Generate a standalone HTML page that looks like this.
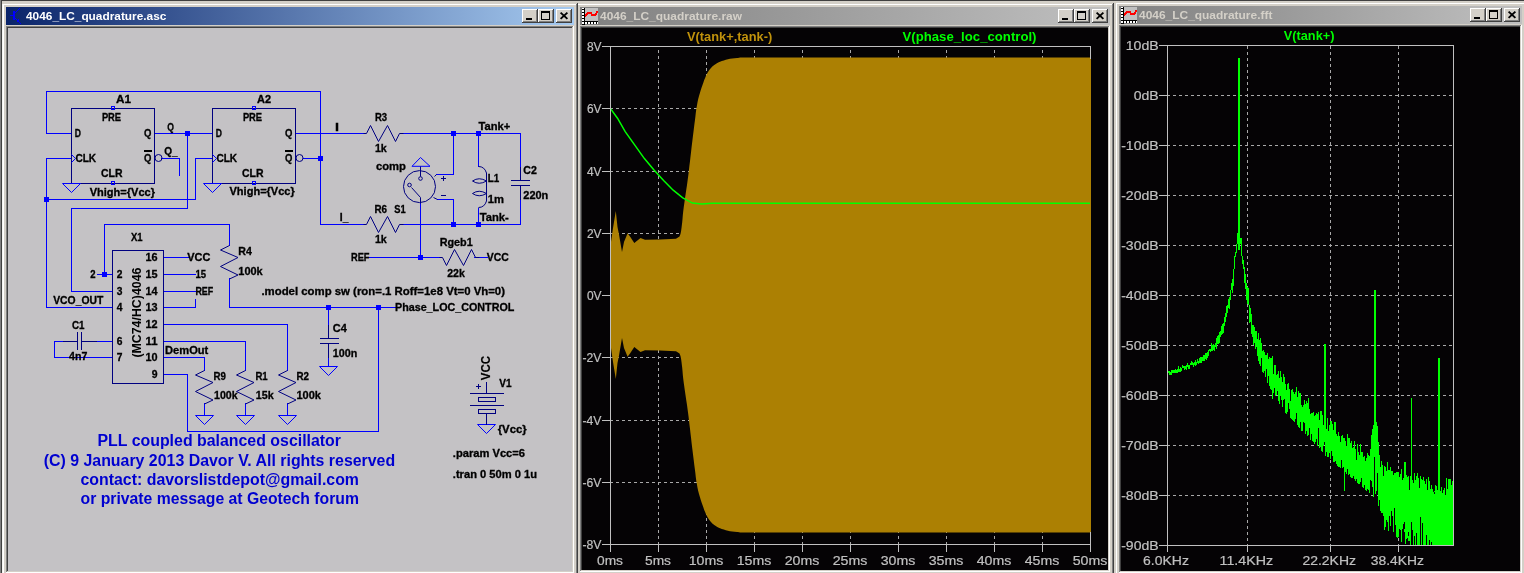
<!DOCTYPE html><html><head><meta charset="utf-8"><style>html,body{margin:0;padding:0;background:#d4d0c8;overflow:hidden}svg{display:block;will-change:transform}</style></head><body><svg width="1524" height="573" viewBox="0 0 1524 573" font-family='"Liberation Sans", sans-serif'>
<defs><linearGradient id="ga" x1="0" x2="1" y1="0" y2="0"><stop offset="0" stop-color="#0a246a"/><stop offset="1" stop-color="#a6caf0"/></linearGradient><linearGradient id="gi" x1="0" x2="1" y1="0" y2="0"><stop offset="0" stop-color="#808080"/><stop offset="1" stop-color="#c0c0c0"/></linearGradient><clipPath id="cb"><rect x="582" y="28" width="526" height="542"/></clipPath><clipPath id="cc"><rect x="1121" y="27" width="399" height="543"/></clipPath><clipPath id="ca"><rect x="8" y="28" width="564" height="543"/></clipPath></defs>
<rect x="0" y="0" width="1524" height="573" fill="#d4d0c8"/>
<g shape-rendering="crispEdges">
<rect x="0" y="0" width="1524" height="1" fill="#404040"/>
<rect x="0" y="0" width="1" height="573" fill="#808080"/>
<rect x="1" y="1" width="1" height="572" fill="#404040"/>
</g>
<g shape-rendering="crispEdges">
<rect x="1115" y="2" width="411" height="575" fill="#d4d0c8"/>
<rect x="1116" y="3" width="409" height="1" fill="#ffffff"/>
<rect x="1116" y="3" width="1" height="573" fill="#ffffff"/>
<rect x="1115" y="576" width="411" height="1" fill="#404040"/>
<rect x="1525" y="2" width="1" height="575" fill="#404040"/>
<rect x="1116" y="575" width="409" height="1" fill="#808080"/>
<rect x="1524" y="3" width="1" height="573" fill="#808080"/>
<rect x="1119" y="6" width="403" height="18" fill="url(#gi)"/>
<rect x="1119" y="25" width="403" height="1" fill="#808080"/>
<rect x="1119" y="25" width="1" height="548" fill="#808080"/>
<rect x="1120" y="26" width="401" height="1" fill="#404040"/>
<rect x="1120" y="26" width="1" height="546" fill="#404040"/>
<rect x="1119" y="572" width="403" height="1" fill="#ffffff"/>
<rect x="1521" y="25" width="1" height="548" fill="#ffffff"/>
<rect x="1120" y="571" width="401" height="1" fill="#d4d0c8"/>
<rect x="1520" y="26" width="1" height="546" fill="#d4d0c8"/>
<rect x="1121" y="27" width="399" height="544" fill="#050305"/>
<text x="1139" y="19" font-size="11" font-weight="bold" fill="#d4d0c8" textLength="133.4" lengthAdjust="spacingAndGlyphs">4046_LC_quadrature.fft</text>
<rect x="1504" y="8" width="16" height="14" fill="#d4d0c8"/>
<rect x="1504" y="8" width="16" height="1" fill="#ffffff"/>
<rect x="1504" y="8" width="1" height="14" fill="#ffffff"/>
<rect x="1504" y="21" width="16" height="1" fill="#404040"/>
<rect x="1519" y="8" width="1" height="14" fill="#404040"/>
<rect x="1505" y="20" width="14" height="1" fill="#808080"/>
<rect x="1518" y="9" width="1" height="12" fill="#808080"/>
<path d="M1508.6 11.6L1515.4 17.9M1515.4 11.6L1508.6 17.9" stroke="#000" stroke-width="1.9" shape-rendering="geometricPrecision"/>
<rect x="1486" y="8" width="16" height="14" fill="#d4d0c8"/>
<rect x="1486" y="8" width="16" height="1" fill="#ffffff"/>
<rect x="1486" y="8" width="1" height="14" fill="#ffffff"/>
<rect x="1486" y="21" width="16" height="1" fill="#404040"/>
<rect x="1501" y="8" width="1" height="14" fill="#404040"/>
<rect x="1487" y="20" width="14" height="1" fill="#808080"/>
<rect x="1500" y="9" width="1" height="12" fill="#808080"/>
<rect x="1489" y="10" width="9" height="9" fill="#000"/>
<rect x="1490" y="12" width="7" height="6" fill="#d4d0c8"/>
<rect x="1470" y="8" width="16" height="14" fill="#d4d0c8"/>
<rect x="1470" y="8" width="16" height="1" fill="#ffffff"/>
<rect x="1470" y="8" width="1" height="14" fill="#ffffff"/>
<rect x="1470" y="21" width="16" height="1" fill="#404040"/>
<rect x="1485" y="8" width="1" height="14" fill="#404040"/>
<rect x="1471" y="20" width="14" height="1" fill="#808080"/>
<rect x="1484" y="9" width="1" height="12" fill="#808080"/>
<rect x="1474" y="17" width="6" height="2" fill="#000"/>
<rect x="1124" y="7" width="13" height="13" fill="#c0c0c0"/>
<rect x="1121" y="7" width="2" height="16" fill="#ffffff"/>
<rect x="1121" y="21" width="16" height="2" fill="#ffffff"/>
<rect x="1121" y="8" width="3" height="1" fill="#000"/>
<rect x="1121" y="11" width="3" height="1" fill="#000"/>
<rect x="1121" y="14" width="3" height="1" fill="#000"/>
<rect x="1121" y="17" width="3" height="1" fill="#000"/>
<rect x="1121" y="20" width="3" height="1" fill="#000"/>
<rect x="1121" y="23" width="3" height="1" fill="#000"/>
<rect x="1123" y="7" width="1" height="16" fill="#000"/>
<rect x="1121" y="20" width="16" height="1" fill="#000"/>
<rect x="1123" y="21" width="1" height="2" fill="#000"/>
<rect x="1126" y="21" width="1" height="2" fill="#000"/>
<rect x="1129" y="21" width="1" height="2" fill="#000"/>
<rect x="1132" y="21" width="1" height="2" fill="#000"/>
<rect x="1135" y="21" width="1" height="2" fill="#000"/>
<path d="M1124 15.5L1127.5 11.5L1129.5 11.5L1131.5 14.3L1133.5 14.3L1136.8 10.5" stroke="#ff0000" stroke-width="2" fill="none"/>
</g>
<g clip-path="url(#cc)">
<path d="M1167 95.5H1453" stroke="#a8a8a8" stroke-width="1" stroke-dasharray="3 3" shape-rendering="crispEdges"/>
<path d="M1167 145.5H1453" stroke="#a8a8a8" stroke-width="1" stroke-dasharray="3 3" shape-rendering="crispEdges"/>
<path d="M1167 195.5H1453" stroke="#a8a8a8" stroke-width="1" stroke-dasharray="3 3" shape-rendering="crispEdges"/>
<path d="M1167 245.5H1453" stroke="#a8a8a8" stroke-width="1" stroke-dasharray="3 3" shape-rendering="crispEdges"/>
<path d="M1167 295.5H1453" stroke="#a8a8a8" stroke-width="1" stroke-dasharray="3 3" shape-rendering="crispEdges"/>
<path d="M1167 345.5H1453" stroke="#a8a8a8" stroke-width="1" stroke-dasharray="3 3" shape-rendering="crispEdges"/>
<path d="M1167 395.5H1453" stroke="#a8a8a8" stroke-width="1" stroke-dasharray="3 3" shape-rendering="crispEdges"/>
<path d="M1167 445.5H1453" stroke="#a8a8a8" stroke-width="1" stroke-dasharray="3 3" shape-rendering="crispEdges"/>
<path d="M1167 495.5H1453" stroke="#a8a8a8" stroke-width="1" stroke-dasharray="3 3" shape-rendering="crispEdges"/>
<path d="M1247.5 46V545" stroke="#a8a8a8" stroke-width="1" stroke-dasharray="3 3" shape-rendering="crispEdges"/>
<path d="M1330.5 46V545" stroke="#a8a8a8" stroke-width="1" stroke-dasharray="3 3" shape-rendering="crispEdges"/>
<path d="M1398.5 46V545" stroke="#a8a8a8" stroke-width="1" stroke-dasharray="3 3" shape-rendering="crispEdges"/>
<path d="M1167.0 373.8 L1167.4 374.9 L1167.8 374.3 L1168.3 372.1 L1168.7 371.8 L1169.1 371.9 L1169.5 373.2 L1169.9 371.9 L1170.3 373.8 L1170.7 373.4 L1171.1 375.2 L1171.5 374.8 L1171.9 371.2 L1172.4 371.7 L1172.8 371.0 L1173.2 372.7 L1173.6 372.2 L1174.0 369.9 L1174.4 372.5 L1174.7 370.8 L1175.1 371.2 L1175.5 372.8 L1175.9 370.1 L1176.3 371.0 L1176.7 371.9 L1177.1 373.1 L1177.5 370.2 L1177.9 368.9 L1178.3 368.0 L1178.6 371.4 L1179.0 372.3 L1179.4 370.7 L1179.8 370.0 L1180.2 371.5 L1180.5 369.2 L1180.9 367.1 L1181.3 369.7 L1181.7 370.8 L1182.0 368.3 L1182.4 366.0 L1182.8 367.0 L1183.2 366.2 L1183.5 366.5 L1183.9 367.5 L1184.3 365.9 L1184.6 367.9 L1185.0 369.5 L1185.4 366.5 L1185.7 366.7 L1186.1 369.8 L1186.4 365.6 L1186.8 365.7 L1187.2 367.1 L1187.5 363.3 L1187.9 365.9 L1188.2 369.0 L1188.6 366.2 L1188.9 366.9 L1189.3 368.6 L1189.7 368.4 L1190.0 365.1 L1190.4 363.5 L1190.7 363.1 L1191.0 363.9 L1191.4 364.3 L1191.7 360.8 L1192.1 362.8 L1192.4 361.9 L1192.8 365.1 L1193.1 363.2 L1193.5 363.6 L1193.8 366.5 L1194.1 363.8 L1194.5 361.7 L1194.8 363.0 L1195.2 365.7 L1195.5 360.4 L1195.8 363.2 L1196.2 363.0 L1196.5 362.7 L1196.8 365.0 L1197.2 361.0 L1197.5 360.3 L1197.8 361.8 L1198.1 360.6 L1198.5 363.3 L1198.8 363.5 L1199.1 362.9 L1199.5 359.2 L1199.8 359.6 L1200.1 357.2 L1200.4 358.7 L1200.7 362.7 L1201.1 362.6 L1201.4 362.4 L1201.7 357.5 L1202.0 357.1 L1202.3 359.3 L1202.7 361.1 L1203.0 359.2 L1203.3 355.3 L1203.6 361.3 L1203.9 359.4 L1204.2 355.4 L1204.6 356.1 L1204.9 360.7 L1205.2 356.0 L1205.5 358.1 L1205.8 353.4 L1206.1 359.6 L1206.4 352.9 L1206.7 359.1 L1207.0 353.6 L1207.3 351.6 L1207.6 358.2 L1207.9 353.8 L1208.2 352.8 L1208.5 356.3 L1208.8 350.8 L1209.1 350.4 L1209.5 350.2 L1209.8 348.7 L1210.0 350.2 L1210.3 351.7 L1210.6 350.1 L1210.9 350.4 L1211.2 350.2 L1211.5 349.2 L1211.8 343.3 L1212.1 346.3 L1212.4 351.1 L1212.7 347.0 L1213.0 348.6 L1213.3 344.0 L1213.6 345.0 L1213.9 349.9 L1214.2 346.9 L1214.5 351.3 L1214.7 346.5 L1215.0 345.1 L1215.3 344.1 L1215.6 343.9 L1215.9 345.8 L1216.2 348.9 L1216.5 343.3 L1216.7 347.0 L1217.0 338.1 L1217.3 336.8 L1217.6 336.2 L1217.9 343.8 L1218.2 336.1 L1218.4 340.7 L1218.7 344.3 L1219.0 334.9 L1219.3 336.0 L1219.5 342.5 L1219.8 332.3 L1220.1 335.3 L1220.4 331.4 L1220.7 336.6 L1220.9 333.8 L1221.2 326.1 L1221.5 333.4 L1221.7 326.2 L1222.0 334.8 L1222.3 325.7 L1222.6 323.7 L1222.8 326.5 L1223.1 327.5 L1223.4 332.5 L1223.6 322.9 L1223.9 326.4 L1224.2 319.5 L1224.4 325.6 L1224.7 316.7 L1225.0 322.5 L1225.2 314.6 L1225.5 313.0 L1225.8 316.8 L1226.0 316.7 L1226.3 312.3 L1226.6 314.1 L1226.8 307.8 L1227.1 305.4 L1227.3 308.1 L1227.6 313.0 L1227.9 307.9 L1228.1 305.0 L1228.4 302.7 L1228.6 307.8 L1228.9 299.4 L1229.2 309.2 L1229.4 306.0 L1229.7 299.3 L1229.9 296.8 L1230.2 299.5 L1230.4 293.7 L1230.7 297.2 L1230.9 292.0 L1231.2 285.9 L1231.4 285.2 L1231.7 286.6 L1232.0 283.1 L1232.2 293.0 L1232.5 283.3 L1232.7 282.2 L1233.0 279.4 L1233.2 279.4 L1233.4 285.8 L1233.7 274.3 L1233.9 272.2 L1234.2 263.4 L1234.4 268.2 L1234.7 262.8 L1234.9 256.2 L1235.2 256.1 L1235.4 252.5 L1235.7 252.8 L1235.9 252.8 L1236.2 252.2 L1236.4 249.3 L1236.6 243.8 L1236.9 247.1 L1237.1 242.0 L1237.4 233.2 L1237.6 241.4 L1237.8 241.0 L1238.1 238.1 L1238.3 241.0 L1238.6 244.0 L1238.8 241.6 L1239.0 242.5 L1239.3 239.0 L1239.5 238.2 L1239.7 237.9 L1240.0 241.4 L1240.2 242.0 L1240.5 240.9 L1240.7 243.9 L1240.9 238.7 L1241.2 237.8 L1241.4 243.4 L1241.6 243.5 L1241.9 254.9 L1242.1 256.9 L1242.3 256.2 L1242.6 257.9 L1242.8 263.2 L1243.0 263.3 L1243.2 260.0 L1243.5 268.6 L1243.7 268.0 L1243.9 263.7 L1244.2 273.2 L1244.4 275.1 L1244.6 274.8 L1244.8 276.0 L1245.1 285.7 L1245.3 287.6 L1245.5 273.7 L1245.7 289.2 L1246.0 284.3 L1246.2 282.6 L1246.4 284.1 L1246.6 284.5 L1246.9 300.0 L1247.1 299.4 L1247.3 303.5 L1247.5 291.9 L1247.8 297.3 L1248.0 287.3 L1248.2 299.8 L1248.4 296.1 L1248.6 300.7 L1248.9 291.9 L1249.1 315.1 L1249.3 318.6 L1249.5 320.1 L1249.7 308.3 L1250.0 323.0 L1250.2 310.7 L1250.4 310.4 L1250.6 307.8 L1250.8 313.0 L1251.0 313.6 L1251.3 319.8 L1251.5 318.4 L1251.7 333.8 L1251.9 326.2 L1252.1 336.5 L1252.3 331.1 L1252.5 332.8 L1252.8 334.7 L1253.0 324.9 L1253.2 342.2 L1253.4 330.0 L1253.6 327.2 L1253.8 344.5 L1254.0 336.4 L1254.2 334.7 L1254.4 327.0 L1254.7 328.6 L1254.9 335.4 L1255.1 349.2 L1255.3 335.8 L1255.5 330.9 L1255.7 334.9 L1255.9 333.3 L1256.1 341.3 L1256.3 347.3 L1256.5 339.1 L1256.7 338.8 L1256.9 330.9 L1257.2 356.4 L1257.4 343.3 L1257.6 356.3 L1257.8 339.1 L1258.0 342.5 L1258.2 359.5 L1258.4 359.5 L1258.6 333.0 L1258.8 361.3 L1259.0 349.7 L1259.2 345.5 L1259.4 359.6 L1259.6 363.8 L1259.8 339.6 L1260.0 350.8 L1260.2 365.5 L1260.4 355.2 L1260.6 350.4 L1260.8 338.3 L1261.0 345.7 L1261.2 356.9 L1261.4 343.5 L1261.6 357.5 L1261.8 343.7 L1262.0 355.2 L1262.2 352.1 L1262.4 358.2 L1262.6 350.8 L1262.8 371.8 L1263.0 372.2 L1263.2 350.3 L1263.4 373.0 L1263.6 353.0 L1263.8 358.2 L1264.0 356.6 L1264.2 364.0 L1264.4 352.5 L1264.5 355.8 L1264.7 365.8 L1264.9 371.0 L1265.1 361.3 L1265.3 377.2 L1265.5 373.4 L1265.7 355.2 L1265.9 357.6 L1266.1 363.0 L1266.3 356.5 L1266.5 368.9 L1266.7 355.0 L1266.9 357.4 L1267.0 355.6 L1267.2 352.7 L1267.4 381.7 L1267.6 373.8 L1267.8 382.5 L1268.0 359.0 L1268.2 375.5 L1268.4 372.8 L1268.6 365.1 L1268.7 360.1 L1268.9 363.5 L1269.1 385.3 L1269.3 385.7 L1269.5 366.7 L1269.7 382.4 L1269.9 357.5 L1270.1 368.2 L1270.2 363.8 L1270.4 389.2 L1270.6 370.1 L1270.8 381.6 L1271.0 358.3 L1271.2 389.1 L1271.3 381.6 L1271.5 369.7 L1271.7 390.0 L1271.9 368.3 L1272.1 370.0 L1272.3 355.6 L1272.4 391.2 L1272.6 398.6 L1272.8 369.0 L1273.0 392.1 L1273.2 373.6 L1273.4 374.9 L1273.5 393.0 L1273.7 388.1 L1273.9 389.5 L1274.1 381.0 L1274.3 373.6 L1274.4 388.2 L1274.6 370.9 L1274.8 372.5 L1275.0 364.6 L1275.2 375.2 L1275.3 395.9 L1275.5 374.2 L1275.7 369.1 L1275.9 387.4 L1276.0 374.2 L1276.2 384.9 L1276.4 389.8 L1276.6 386.9 L1276.7 395.2 L1276.9 384.4 L1277.1 390.5 L1277.3 376.5 L1277.5 374.0 L1277.6 385.9 L1277.8 381.2 L1278.0 384.4 L1278.2 395.6 L1278.3 400.8 L1278.5 384.4 L1278.7 398.3 L1278.8 371.2 L1279.0 375.3 L1279.2 402.2 L1279.4 402.5 L1279.5 401.5 L1279.7 380.7 L1279.9 403.3 L1280.1 390.3 L1280.2 380.4 L1280.4 378.3 L1280.6 382.0 L1280.7 393.2 L1280.9 371.3 L1281.1 394.7 L1281.2 384.6 L1281.4 400.2 L1281.6 376.9 L1281.8 387.5 L1281.9 394.7 L1282.1 381.7 L1282.3 388.7 L1282.4 386.3 L1282.6 386.7 L1282.8 388.2 L1282.9 406.9 L1283.1 388.9 L1283.3 400.1 L1283.4 374.0 L1283.6 391.2 L1283.8 391.0 L1283.9 392.7 L1284.1 376.9 L1284.3 398.5 L1284.4 382.7 L1284.6 391.4 L1284.8 385.4 L1284.9 396.0 L1285.1 384.5 L1285.3 406.8 L1285.4 387.8 L1285.6 412.4 L1285.8 395.8 L1285.9 412.7 L1286.1 412.9 L1286.2 409.0 L1286.4 407.1 L1286.6 394.6 L1286.7 409.8 L1286.9 390.0 L1287.1 398.2 L1287.2 387.3 L1287.4 405.4 L1287.5 383.6 L1287.7 407.1 L1287.9 411.7 L1288.0 401.6 L1288.2 402.7 L1288.4 396.9 L1288.5 397.3 L1288.7 398.0 L1288.8 383.4 L1289.0 399.5 L1289.2 409.0 L1289.3 399.0 L1289.5 399.6 L1289.6 390.0 L1289.8 388.8 L1290.0 401.1 L1290.1 405.1 L1290.3 408.9 L1290.4 401.6 L1290.6 401.6 L1290.7 418.0 L1290.9 416.3 L1291.1 409.7 L1291.2 393.9 L1291.4 402.1 L1291.5 418.9 L1291.7 413.0 L1291.8 389.6 L1292.0 411.7 L1292.2 419.6 L1292.3 415.1 L1292.5 403.6 L1292.6 395.8 L1292.8 404.0 L1292.9 388.9 L1293.1 394.8 L1293.2 410.0 L1293.4 395.4 L1293.6 393.7 L1293.7 409.0 L1293.9 420.7 L1294.0 407.5 L1294.2 393.9 L1294.3 409.4 L1294.5 416.5 L1294.6 422.3 L1294.8 402.2 L1294.9 404.6 L1295.1 414.5 L1295.2 418.6 L1295.4 410.9 L1295.5 409.3 L1295.7 401.9 L1295.8 391.7 L1296.0 410.8 L1296.1 407.8 L1296.3 397.2 L1296.4 412.5 L1296.6 387.1 L1296.7 396.7 L1296.9 400.8 L1297.0 411.0 L1297.2 412.3 L1297.3 398.4 L1297.5 402.0 L1297.6 397.2 L1297.8 424.9 L1297.9 406.7 L1298.1 391.4 L1298.2 411.5 L1298.4 414.3 L1298.5 426.6 L1298.7 403.4 L1298.8 395.7 L1299.0 407.9 L1299.1 396.9 L1299.3 392.8 L1299.4 427.6 L1299.6 402.9 L1299.7 411.5 L1299.9 423.3 L1300.0 406.5 L1300.2 397.3 L1300.3 422.1 L1300.5 392.6 L1300.6 420.6 L1300.7 420.6 L1300.9 405.0 L1301.0 405.3 L1301.2 408.3 L1301.3 419.2 L1301.5 420.0 L1301.6 414.8 L1301.8 423.8 L1301.9 407.1 L1302.0 430.4 L1302.2 430.4 L1302.3 407.4 L1302.5 422.4 L1302.6 422.7 L1302.8 431.0 L1302.9 407.4 L1303.1 418.7 L1303.2 420.0 L1303.3 414.1 L1303.5 421.5 L1303.6 413.5 L1303.8 417.4 L1303.9 407.6 L1304.1 402.8 L1304.2 405.7 L1304.3 404.4 L1304.5 411.9 L1304.6 400.1 L1304.8 422.6 L1304.9 422.9 L1305.0 403.2 L1305.2 413.1 L1305.3 429.3 L1305.5 403.6 L1305.6 434.1 L1305.7 405.8 L1305.9 406.1 L1306.0 431.8 L1306.2 421.9 L1306.3 422.0 L1306.4 406.2 L1306.6 427.2 L1306.7 413.4 L1306.9 401.5 L1307.0 412.7 L1307.1 415.1 L1307.3 435.8 L1307.4 433.5 L1307.6 403.2 L1307.7 417.5 L1307.8 415.3 L1308.0 420.7 L1308.1 435.0 L1308.2 432.3 L1308.4 397.6 L1308.5 429.5 L1308.7 399.8 L1308.8 420.2 L1308.9 411.7 L1309.1 416.5 L1309.2 414.3 L1309.3 415.0 L1309.5 427.7 L1309.6 409.7 L1309.7 408.6 L1309.9 428.0 L1310.0 425.6 L1310.1 419.1 L1310.3 438.9 L1310.4 439.7 L1310.6 414.0 L1310.7 439.3 L1310.8 419.1 L1311.0 415.2 L1311.1 423.7 L1311.2 431.8 L1311.4 418.8 L1311.5 413.3 L1311.6 428.5 L1311.8 414.0 L1311.9 433.5 L1312.0 412.8 L1312.2 440.9 L1312.3 415.3 L1312.4 430.9 L1312.6 414.3 L1312.7 417.4 L1312.8 425.1 L1313.0 419.9 L1313.1 441.8 L1313.2 412.9 L1313.4 413.1 L1313.5 442.2 L1313.6 433.3 L1313.7 416.9 L1313.9 413.8 L1314.0 422.6 L1314.1 423.0 L1314.3 432.3 L1314.4 430.2 L1314.5 415.8 L1314.7 423.7 L1314.8 443.6 L1314.9 428.8 L1315.1 424.5 L1315.2 434.5 L1315.3 437.0 L1315.4 441.9 L1315.6 431.7 L1315.7 422.2 L1315.8 415.3 L1316.0 438.1 L1316.1 431.8 L1316.2 425.7 L1316.3 431.8 L1316.5 433.9 L1316.6 419.3 L1316.7 438.7 L1316.9 428.3 L1317.0 413.1 L1317.1 419.0 L1317.2 446.1 L1317.4 417.0 L1317.5 430.4 L1317.6 429.7 L1317.8 442.6 L1317.9 427.1 L1318.0 421.5 L1318.1 426.8 L1318.3 418.8 L1318.4 426.0 L1318.5 423.9 L1318.6 411.9 L1318.8 428.2 L1318.9 426.5 L1319.0 423.0 L1319.1 448.1 L1319.3 423.0 L1319.4 428.1 L1319.5 420.3 L1319.7 443.4 L1319.8 430.6 L1319.9 423.9 L1320.0 427.6 L1320.2 444.5 L1320.3 431.0 L1320.4 433.5 L1320.5 445.8 L1320.7 447.1 L1320.8 428.9 L1320.9 430.4 L1321.0 410.9 L1321.1 426.6 L1321.3 427.3 L1321.4 430.9 L1321.5 438.3 L1321.6 450.5 L1321.8 418.9 L1321.9 450.8 L1322.0 422.9 L1322.1 437.9 L1322.3 414.8 L1322.4 438.9 L1322.5 421.8 L1322.6 426.6 L1322.7 429.9 L1322.9 451.7 L1323.0 424.8 L1323.1 437.9 L1323.2 440.2 L1323.4 445.6 L1323.5 426.2 L1323.6 435.9 L1323.7 433.3 L1323.8 436.9 L1324.0 427.8 L1324.1 435.2 L1324.2 434.6 L1324.3 435.4 L1324.4 436.9 L1324.6 415.6 L1324.7 435.0 L1324.8 441.5 L1324.9 344.0 L1325.1 344.0 L1325.2 344.0 L1325.3 344.0 L1325.4 344.0 L1325.5 431.9 L1325.7 437.2 L1325.8 456.0 L1325.9 444.6 L1326.0 432.6 L1326.1 433.5 L1326.2 438.1 L1326.4 429.2 L1326.5 435.4 L1326.6 451.0 L1326.7 451.1 L1326.8 438.0 L1327.0 438.2 L1327.1 443.2 L1327.2 433.4 L1327.3 432.7 L1327.4 442.8 L1327.6 422.8 L1327.7 456.2 L1327.8 423.7 L1327.9 418.4 L1328.0 456.5 L1328.1 444.3 L1328.3 456.7 L1328.4 443.0 L1328.5 446.1 L1328.6 445.6 L1328.7 445.2 L1328.8 449.4 L1329.0 430.6 L1329.1 450.2 L1329.2 445.2 L1329.3 453.2 L1329.4 442.2 L1329.5 434.7 L1329.7 435.3 L1329.8 445.2 L1329.9 425.9 L1330.0 424.9 L1330.1 453.2 L1330.2 458.6 L1330.3 422.4 L1330.5 444.1 L1330.6 458.9 L1330.7 438.9 L1330.8 446.2 L1330.9 431.3 L1331.0 420.6 L1331.2 430.3 L1331.3 429.0 L1331.4 430.8 L1331.5 449.8 L1331.6 450.6 L1331.7 427.2 L1331.8 449.9 L1331.9 450.7 L1332.1 446.8 L1332.2 441.6 L1332.3 435.8 L1332.4 450.6 L1332.5 424.4 L1332.6 456.0 L1332.7 437.9 L1332.9 433.5 L1333.0 443.1 L1333.1 439.8 L1333.2 441.9 L1333.3 433.1 L1333.4 439.9 L1333.5 448.2 L1333.6 440.8 L1333.8 461.9 L1333.9 446.4 L1334.0 429.9 L1334.1 451.5 L1334.2 439.8 L1334.3 462.4 L1334.4 448.0 L1334.5 442.8 L1334.7 441.4 L1334.8 448.3 L1334.9 457.4 L1335.0 422.2 L1335.1 443.1 L1335.2 458.3 L1335.3 429.8 L1335.4 458.2 L1335.5 448.0 L1335.6 461.1 L1335.8 452.3 L1335.9 441.7 L1336.0 447.9 L1336.1 437.5 L1336.2 464.2 L1336.3 449.9 L1336.4 445.6 L1336.5 439.6 L1336.6 458.1 L1336.7 433.8 L1336.9 457.3 L1337.0 449.6 L1337.1 465.0 L1337.2 446.6 L1337.3 438.2 L1337.4 438.1 L1337.5 443.6 L1337.6 444.8 L1337.7 437.2 L1337.8 465.7 L1337.9 435.7 L1338.1 459.2 L1338.2 451.3 L1338.3 448.9 L1338.4 431.8 L1338.5 464.9 L1338.6 450.7 L1338.7 459.4 L1338.8 466.6 L1338.9 461.9 L1339.0 441.8 L1339.1 440.3 L1339.2 435.8 L1339.3 451.0 L1339.5 448.1 L1339.6 467.3 L1339.7 452.7 L1339.8 437.9 L1339.9 442.7 L1340.0 454.5 L1340.1 455.7 L1340.2 448.5 L1340.3 468.0 L1340.4 442.0 L1340.5 443.2 L1340.6 468.3 L1340.7 464.7 L1340.8 461.7 L1340.9 455.5 L1341.1 435.7 L1341.2 460.3 L1341.3 456.9 L1341.4 453.9 L1341.5 438.6 L1341.6 444.0 L1341.7 450.6 L1341.8 443.6 L1341.9 457.5 L1342.0 459.2 L1342.1 435.0 L1342.2 443.4 L1342.3 468.3 L1342.4 440.8 L1342.5 439.1 L1342.6 466.7 L1342.7 450.6 L1342.8 465.5 L1342.9 456.4 L1343.0 444.1 L1343.2 460.0 L1343.3 441.7 L1343.4 445.7 L1343.5 442.2 L1343.6 467.3 L1343.7 442.8 L1343.8 447.6 L1343.9 440.9 L1344.0 438.1 L1344.1 458.9 L1344.2 452.5 L1344.3 446.2 L1344.4 449.4 L1344.5 471.5 L1344.6 440.7 L1344.7 471.7 L1344.8 461.9 L1344.9 490.5 L1345.0 466.3 L1345.1 442.9 L1345.2 468.1 L1345.3 444.7 L1345.4 472.3 L1345.5 456.6 L1345.6 444.8 L1345.7 462.0 L1345.8 440.8 L1345.9 458.2 L1346.0 448.1 L1346.1 458.5 L1346.2 467.6 L1346.3 446.1 L1346.4 463.5 L1346.5 463.1 L1346.6 467.9 L1346.7 470.1 L1346.8 455.2 L1346.9 473.6 L1347.0 472.8 L1347.1 446.2 L1347.3 451.8 L1347.4 452.0 L1347.5 434.1 L1347.6 454.3 L1347.7 444.2 L1347.8 469.2 L1347.9 450.9 L1348.0 452.8 L1348.1 441.5 L1348.2 474.6 L1348.3 456.9 L1348.4 457.8 L1348.5 474.8 L1348.6 447.2 L1348.7 449.5 L1348.8 439.6 L1348.9 464.0 L1349.0 438.3 L1349.1 459.6 L1349.2 464.4 L1349.2 474.4 L1349.3 441.4 L1349.4 457.3 L1349.5 451.1 L1349.6 454.8 L1349.7 460.7 L1349.8 446.9 L1349.9 467.1 L1350.0 471.7 L1350.1 454.7 L1350.2 472.8 L1350.3 455.1 L1350.4 469.1 L1350.5 450.6 L1350.6 456.5 L1350.7 470.9 L1350.8 471.6 L1350.9 443.3 L1351.0 477.0 L1351.1 451.4 L1351.2 463.3 L1351.3 459.9 L1351.4 457.0 L1351.5 440.7 L1351.6 477.5 L1351.7 477.6 L1351.8 472.1 L1351.9 478.0 L1352.0 464.3 L1352.1 465.8 L1352.2 461.0 L1352.3 463.8 L1352.4 460.5 L1352.5 478.2 L1352.6 454.2 L1352.7 448.1 L1352.8 478.4 L1352.9 453.4 L1353.0 461.4 L1353.1 448.5 L1353.2 454.3 L1353.3 454.3 L1353.3 447.1 L1353.4 475.5 L1353.5 463.0 L1353.6 451.8 L1353.7 459.7 L1353.8 464.7 L1353.9 455.5 L1354.0 452.8 L1354.1 457.7 L1354.2 441.4 L1354.3 477.9 L1354.4 463.3 L1354.5 455.1 L1354.6 455.5 L1354.7 451.2 L1354.8 479.2 L1354.9 446.9 L1355.0 460.1 L1355.1 449.5 L1355.2 480.4 L1355.3 451.5 L1355.3 457.8 L1355.4 466.2 L1355.5 475.9 L1355.6 471.4 L1355.7 472.5 L1355.8 473.9 L1355.9 481.1 L1356.0 480.1 L1356.1 473.1 L1356.2 462.8 L1356.3 465.3 L1356.4 474.3 L1356.5 466.7 L1356.6 461.8 L1356.7 471.5 L1356.8 460.1 L1356.9 460.0 L1356.9 475.0 L1357.0 463.6 L1357.1 454.0 L1357.2 452.7 L1357.3 466.5 L1357.4 482.3 L1357.5 479.1 L1357.6 482.5 L1357.7 461.9 L1357.8 443.9 L1357.9 466.4 L1358.0 482.8 L1358.1 465.6 L1358.2 465.0 L1358.2 471.1 L1358.3 460.4 L1358.4 460.2 L1358.5 471.0 L1358.6 451.8 L1358.7 461.9 L1358.8 467.4 L1358.9 483.6 L1359.0 463.3 L1359.1 483.7 L1359.2 466.3 L1359.3 455.2 L1359.3 484.0 L1359.4 465.9 L1359.5 484.1 L1359.6 479.3 L1359.7 484.3 L1359.8 455.1 L1359.9 466.3 L1360.0 456.4 L1360.1 470.5 L1360.2 461.7 L1360.3 470.9 L1360.4 463.6 L1360.4 460.5 L1360.5 443.8 L1360.6 481.7 L1360.7 472.5 L1360.8 466.6 L1360.9 459.6 L1361.0 467.8 L1361.1 469.3 L1361.2 454.8 L1361.3 477.1 L1361.3 453.9 L1361.4 467.9 L1361.5 471.1 L1361.6 452.1 L1361.7 478.2 L1361.8 475.5 L1361.9 457.2 L1362.0 454.4 L1362.1 470.4 L1362.2 466.2 L1362.2 452.0 L1362.3 470.7 L1362.4 466.1 L1362.5 460.4 L1362.6 487.0 L1362.7 462.5 L1362.8 481.9 L1362.9 471.8 L1363.0 468.3 L1363.0 460.6 L1363.1 476.8 L1363.2 462.8 L1363.3 468.2 L1363.4 460.9 L1363.5 464.5 L1363.6 488.0 L1363.7 471.1 L1363.8 470.2 L1363.8 466.1 L1363.9 456.9 L1364.0 464.7 L1364.1 459.7 L1364.2 461.3 L1364.3 475.4 L1364.4 458.5 L1364.5 455.8 L1364.5 484.9 L1364.6 468.0 L1364.7 483.0 L1364.8 465.4 L1364.9 466.2 L1365.0 460.9 L1365.1 470.3 L1365.2 468.8 L1365.3 478.1 L1365.3 489.7 L1365.4 466.3 L1365.5 474.3 L1365.6 489.0 L1365.7 471.1 L1365.8 463.6 L1365.9 467.2 L1365.9 473.2 L1366.0 467.5 L1366.1 460.7 L1366.2 465.5 L1366.3 458.0 L1366.4 466.9 L1366.5 465.0 L1366.6 465.5 L1366.6 459.0 L1366.7 464.7 L1366.8 491.1 L1366.9 491.2 L1367.0 459.5 L1367.1 453.3 L1367.2 477.9 L1367.2 469.2 L1367.3 479.6 L1367.4 488.5 L1367.5 476.8 L1367.6 459.2 L1367.7 481.6 L1367.8 454.8 L1367.8 461.4 L1367.9 466.3 L1368.0 454.9 L1368.1 477.7 L1368.2 488.6 L1368.3 481.3 L1368.4 470.8 L1368.4 468.2 L1368.5 488.6 L1368.6 466.3 L1368.7 490.3 L1368.8 456.1 L1368.9 460.0 L1369.0 464.0 L1369.0 483.6 L1369.1 481.0 L1369.2 483.7 L1369.3 466.7 L1369.4 492.5 L1369.5 479.7 L1369.5 467.9 L1369.6 475.9 L1369.7 489.2 L1369.8 456.5 L1369.9 479.3 L1370.0 483.2 L1370.1 462.0 L1370.1 463.5 L1370.2 460.5 L1370.3 461.7 L1370.4 462.9 L1370.5 455.8 L1370.6 473.8 L1370.6 457.6 L1370.7 468.3 L1370.8 456.2 L1370.9 453.3 L1371.0 448.6 L1371.1 452.5 L1371.1 456.2 L1371.2 440.4 L1371.3 450.7 L1371.4 470.4 L1371.5 451.5 L1371.6 435.7 L1371.6 480.7 L1371.7 459.9 L1371.8 434.9 L1371.9 457.7 L1372.0 462.2 L1372.1 487.2 L1372.1 459.9 L1372.2 445.8 L1372.3 450.7 L1372.4 433.4 L1372.5 472.8 L1372.5 482.9 L1372.6 438.9 L1372.7 430.6 L1372.8 458.9 L1372.9 429.1 L1373.0 464.9 L1373.0 448.7 L1373.1 450.2 L1373.2 455.5 L1373.3 459.5 L1373.4 439.7 L1373.5 453.8 L1373.5 425.0 L1373.6 471.1 L1373.7 497.1 L1373.8 488.0 L1373.9 447.7 L1373.9 469.8 L1374.0 441.2 L1374.1 414.0 L1374.2 444.2 L1374.3 437.3 L1374.4 457.3 L1374.4 425.1 L1374.5 448.6 L1374.6 430.5 L1374.7 429.8 L1374.8 290.0 L1374.8 290.0 L1374.9 290.0 L1375.0 290.0 L1375.1 290.0 L1375.2 290.0 L1375.2 290.0 L1375.3 449.3 L1375.4 479.4 L1375.5 436.3 L1375.6 425.5 L1375.6 445.8 L1375.7 493.9 L1375.8 476.4 L1375.9 439.1 L1376.0 482.7 L1376.0 457.1 L1376.1 422.3 L1376.2 461.6 L1376.3 490.9 L1376.4 439.0 L1376.4 460.1 L1376.5 426.3 L1376.6 470.3 L1376.7 447.2 L1376.8 451.6 L1376.8 486.6 L1376.9 429.4 L1377.0 473.4 L1377.1 457.2 L1377.2 463.3 L1377.2 447.9 L1377.3 437.2 L1377.4 472.5 L1377.5 443.5 L1377.6 461.9 L1377.6 426.0 L1377.7 430.3 L1377.8 434.1 L1377.9 446.3 L1378.0 448.6 L1378.0 483.6 L1378.1 506.1 L1378.2 485.7 L1378.3 462.3 L1378.4 472.1 L1378.4 469.5 L1378.5 474.8 L1378.6 472.6 L1378.7 459.4 L1378.7 463.4 L1378.8 455.9 L1378.9 442.5 L1379.0 479.8 L1379.1 457.8 L1379.1 455.3 L1379.2 491.6 L1379.3 469.6 L1379.4 462.2 L1379.4 500.3 L1379.5 456.4 L1379.6 466.3 L1379.7 460.5 L1379.8 462.9 L1379.8 474.2 L1379.9 474.4 L1380.0 484.9 L1380.1 467.7 L1380.1 467.3 L1380.2 480.3 L1380.3 487.3 L1380.4 482.7 L1380.5 470.5 L1380.5 478.3 L1380.6 476.4 L1380.7 470.4 L1380.8 510.8 L1380.8 467.2 L1380.9 479.1 L1381.0 472.8 L1381.1 494.9 L1381.2 481.4 L1381.2 485.3 L1381.3 479.4 L1381.4 476.9 L1381.5 497.3 L1381.5 478.8 L1381.6 512.4 L1381.7 477.8 L1381.8 512.6 L1381.8 461.4 L1381.9 491.9 L1382.0 480.9 L1382.1 476.2 L1382.2 470.0 L1382.2 472.4 L1382.3 485.9 L1382.4 474.5 L1382.5 481.2 L1382.5 474.4 L1382.6 513.2 L1382.7 465.4 L1382.8 477.0 L1382.8 486.1 L1382.9 480.7 L1383.0 484.8 L1383.1 510.8 L1383.1 496.6 L1383.2 492.2 L1383.3 506.3 L1383.4 488.9 L1383.4 513.4 L1383.5 491.6 L1383.6 477.8 L1383.7 484.3 L1383.7 476.0 L1383.8 492.5 L1383.9 516.0 L1384.0 489.5 L1384.0 506.7 L1384.1 478.6 L1384.2 503.2 L1384.3 481.0 L1384.3 510.0 L1384.4 494.7 L1384.5 485.4 L1384.6 509.2 L1384.6 509.4 L1384.7 500.4 L1384.8 475.7 L1384.9 517.5 L1384.9 465.7 L1385.0 529.7 L1385.1 513.4 L1385.2 498.0 L1385.2 475.4 L1385.3 471.5 L1385.4 514.7 L1385.5 509.7 L1385.5 467.1 L1385.6 501.8 L1385.7 467.7 L1385.8 478.1 L1385.8 472.6 L1385.9 519.2 L1386.0 509.7 L1386.1 487.5 L1386.1 485.4 L1386.2 496.0 L1386.3 498.8 L1386.4 473.2 L1386.4 488.1 L1386.5 482.8 L1386.6 520.2 L1386.7 498.7 L1386.7 476.4 L1386.8 470.8 L1386.9 488.8 L1387.0 490.7 L1387.0 464.0 L1387.1 494.9 L1387.2 490.5 L1387.2 521.3 L1387.3 498.3 L1387.4 482.2 L1387.5 521.6 L1387.5 484.6 L1387.6 475.3 L1387.7 462.4 L1387.8 517.8 L1387.8 493.5 L1387.9 479.6 L1388.0 474.2 L1388.0 502.9 L1388.1 469.9 L1388.2 482.8 L1388.3 491.1 L1388.3 531.2 L1388.4 500.7 L1388.5 489.7 L1388.6 523.4 L1388.6 494.8 L1388.7 485.0 L1388.8 485.6 L1388.8 494.1 L1388.9 483.1 L1389.0 491.3 L1389.1 494.3 L1389.1 515.9 L1389.2 499.7 L1389.3 488.9 L1389.4 476.1 L1389.4 491.0 L1389.5 491.0 L1389.6 480.3 L1389.6 506.8 L1389.7 495.9 L1389.8 514.3 L1389.9 470.1 L1389.9 507.8 L1390.0 475.5 L1390.1 481.1 L1390.1 485.0 L1390.2 491.2 L1390.3 473.7 L1390.4 526.4 L1390.4 488.5 L1390.5 505.5 L1390.6 477.1 L1390.6 485.6 L1390.7 480.9 L1390.8 484.7 L1390.9 467.2 L1390.9 493.6 L1391.0 478.6 L1391.1 482.5 L1391.1 481.3 L1391.2 474.3 L1391.3 511.3 L1391.4 488.1 L1391.4 495.9 L1391.5 470.8 L1391.6 486.1 L1391.6 483.5 L1391.7 497.5 L1391.8 485.7 L1391.9 494.4 L1391.9 479.6 L1392.0 500.9 L1392.1 498.5 L1392.1 473.4 L1392.2 486.9 L1392.3 491.4 L1392.4 503.8 L1392.4 495.4 L1392.5 490.2 L1392.6 488.4 L1392.6 515.8 L1392.7 491.4 L1392.8 509.1 L1392.8 503.1 L1392.9 471.1 L1393.0 494.1 L1393.1 505.1 L1393.1 481.4 L1393.2 508.8 L1393.3 475.0 L1393.3 494.7 L1393.4 500.1 L1393.5 491.5 L1393.5 500.7 L1393.6 495.7 L1393.7 509.0 L1393.8 478.4 L1393.8 493.1 L1393.9 532.2 L1394.0 483.5 L1394.0 483.2 L1394.1 494.8 L1394.2 489.5 L1394.2 485.2 L1394.3 508.3 L1394.4 483.5 L1394.4 472.9 L1394.5 488.0 L1394.6 492.4 L1394.7 487.7 L1394.7 481.4 L1394.8 495.2 L1394.9 485.9 L1394.9 489.5 L1395.0 486.3 L1395.1 508.3 L1395.1 502.8 L1395.2 496.9 L1395.3 525.1 L1395.3 516.1 L1395.4 490.6 L1395.5 473.0 L1395.6 474.9 L1395.6 480.8 L1395.7 495.8 L1395.8 493.2 L1395.8 501.1 L1395.9 482.2 L1396.0 479.3 L1396.0 482.1 L1396.1 476.6 L1396.2 529.6 L1396.2 500.5 L1396.3 520.4 L1396.4 479.8 L1396.4 502.5 L1396.5 512.3 L1396.6 483.3 L1396.6 486.7 L1396.7 479.9 L1396.8 487.0 L1396.9 479.8 L1396.9 537.0 L1397.0 471.6 L1397.1 499.9 L1397.1 495.7 L1397.2 492.4 L1397.3 491.1 L1397.3 478.0 L1397.4 478.5 L1397.5 537.8 L1397.5 495.0 L1397.6 488.1 L1397.7 493.9 L1397.7 476.9 L1397.8 515.7 L1397.9 495.7 L1397.9 479.5 L1398.0 519.4 L1398.1 483.5 L1398.1 471.8 L1398.2 536.6 L1398.3 529.1 L1398.3 473.8 L1398.4 492.3 L1398.5 506.1 L1398.5 509.2 L1398.6 475.5 L1398.7 477.3 L1398.7 509.3 L1398.8 492.9 L1398.9 495.0 L1398.9 501.0 L1399.0 497.8 L1399.1 489.6 L1399.1 481.1 L1399.2 528.9 L1399.3 514.2 L1399.3 493.8 L1399.4 477.4 L1399.5 478.8 L1399.5 496.2 L1399.6 493.4 L1399.7 496.2 L1399.7 489.5 L1399.8 491.0 L1399.9 479.4 L1399.9 517.6 L1400.0 520.1 L1400.1 529.8 L1400.1 510.2 L1400.2 503.7 L1400.3 507.3 L1400.3 485.7 L1400.4 490.8 L1400.5 486.9 L1400.5 477.1 L1400.6 484.6 L1400.7 509.8 L1400.7 475.5 L1400.8 499.4 L1400.9 473.6 L1400.9 504.1 L1401.0 489.0 L1401.1 493.7 L1401.1 468.7 L1401.2 491.8 L1401.3 477.5 L1401.3 506.7 L1401.4 481.1 L1401.5 480.6 L1401.5 484.3 L1401.6 542.3 L1401.7 510.8 L1401.7 495.3 L1401.8 523.3 L1401.9 501.5 L1401.9 501.0 L1402.0 510.5 L1402.0 505.9 L1402.1 481.9 L1402.2 503.5 L1402.2 480.6 L1402.3 529.1 L1402.4 507.8 L1402.4 511.9 L1402.5 493.1 L1402.6 510.5 L1402.6 487.9 L1402.7 497.1 L1402.8 479.7 L1402.8 510.9 L1402.9 515.2 L1403.0 483.8 L1403.0 485.5 L1403.1 523.8 L1403.2 505.9 L1403.2 510.7 L1403.3 504.4 L1403.3 514.2 L1403.4 478.2 L1403.5 515.2 L1403.5 500.1 L1403.6 511.6 L1403.7 495.6 L1403.7 479.7 L1403.8 492.9 L1403.9 494.4 L1403.9 484.8 L1404.0 516.2 L1404.1 488.1 L1404.1 487.3 L1404.2 493.9 L1404.2 512.9 L1404.3 504.8 L1404.4 514.3 L1404.4 487.4 L1404.5 491.0 L1404.6 521.6 L1404.6 522.2 L1404.7 496.4 L1404.8 496.7 L1404.8 484.1 L1404.9 482.8 L1405.0 461.9 L1405.0 532.1 L1405.1 513.4 L1405.1 490.8 L1405.2 498.8 L1405.3 497.2 L1405.3 528.3 L1405.4 504.2 L1405.5 502.1 L1405.5 536.1 L1405.6 504.0 L1405.6 491.9 L1405.7 504.9 L1405.8 496.7 L1405.8 543.9 L1405.9 515.9 L1406.0 499.3 L1406.0 509.4 L1406.1 508.0 L1406.2 474.6 L1406.2 482.0 L1406.3 522.5 L1406.3 500.7 L1406.4 475.9 L1406.5 509.3 L1406.5 488.5 L1406.6 488.9 L1406.7 493.9 L1406.7 503.8 L1406.8 505.3 L1406.8 538.5 L1406.9 506.1 L1407.0 483.5 L1407.0 515.5 L1407.1 491.2 L1407.2 497.9 L1407.2 483.6 L1407.3 484.0 L1407.4 476.9 L1407.4 492.7 L1407.5 538.4 L1407.5 489.9 L1407.6 485.3 L1407.7 495.0 L1407.7 488.0 L1407.8 492.9 L1407.9 488.3 L1407.9 525.7 L1408.0 516.9 L1408.0 512.0 L1408.1 483.4 L1408.2 496.4 L1408.2 505.4 L1408.3 488.8 L1408.3 527.3 L1408.4 489.4 L1408.5 488.2 L1408.5 476.0 L1408.6 500.6 L1408.7 532.1 L1408.7 487.7 L1408.8 499.8 L1408.8 506.1 L1408.9 514.6 L1409.0 490.3 L1409.0 541.1 L1409.1 506.9 L1409.2 493.7 L1409.2 510.0 L1409.3 493.7 L1409.3 492.1 L1409.4 521.0 L1409.5 498.9 L1409.5 525.1 L1409.6 491.7 L1409.6 494.6 L1409.7 519.0 L1409.8 501.5 L1409.8 501.3 L1409.9 518.3 L1410.0 517.7 L1410.0 506.1 L1410.1 498.3 L1410.1 524.9 L1410.2 516.2 L1410.3 522.2 L1410.3 508.0 L1410.4 503.3 L1410.4 479.0 L1410.5 516.6 L1410.6 487.0 L1410.6 481.0 L1410.7 545.0 L1410.7 493.0 L1410.8 479.6 L1410.9 491.7 L1410.9 504.3 L1411.0 489.8 L1411.1 398.0 L1411.1 398.0 L1411.2 398.0 L1411.2 398.0 L1411.3 398.0 L1411.4 398.0 L1411.4 398.0 L1411.5 398.0 L1411.5 398.0 L1411.6 398.0 L1411.7 499.1 L1411.7 479.2 L1411.8 509.9 L1411.8 495.0 L1411.9 502.8 L1412.0 521.6 L1412.0 515.5 L1412.1 492.3 L1412.1 480.0 L1412.2 483.9 L1412.3 507.6 L1412.3 497.3 L1412.4 486.7 L1412.4 490.6 L1412.5 510.9 L1412.6 496.8 L1412.6 509.0 L1412.7 490.0 L1412.7 508.9 L1412.8 511.7 L1412.9 529.6 L1412.9 510.0 L1413.0 487.6 L1413.0 521.6 L1413.1 505.3 L1413.2 493.8 L1413.2 505.4 L1413.3 491.9 L1413.3 486.4 L1413.4 526.3 L1413.5 497.8 L1413.5 482.9 L1413.6 514.1 L1413.6 545.0 L1413.7 515.5 L1413.8 517.8 L1413.8 483.2 L1413.9 500.1 L1413.9 490.0 L1414.0 528.1 L1414.1 535.7 L1414.1 497.3 L1414.2 495.3 L1414.2 519.8 L1414.3 473.7 L1414.3 503.7 L1414.4 472.7 L1414.5 515.1 L1414.5 478.5 L1414.6 501.5 L1414.6 493.1 L1414.7 525.0 L1414.8 506.4 L1414.8 490.0 L1414.9 495.5 L1414.9 504.2 L1415.0 488.2 L1415.1 504.0 L1415.1 510.2 L1415.2 480.9 L1415.2 479.8 L1415.3 496.4 L1415.4 510.7 L1415.4 507.2 L1415.5 499.3 L1415.5 528.8 L1415.6 480.7 L1415.6 545.0 L1415.7 496.2 L1415.8 518.8 L1415.8 512.6 L1415.9 483.0 L1415.9 517.1 L1416.0 479.6 L1416.1 533.1 L1416.1 508.6 L1416.2 506.9 L1416.2 491.3 L1416.3 475.7 L1416.3 483.8 L1416.4 510.9 L1416.5 517.6 L1416.5 501.4 L1416.6 516.1 L1416.6 530.6 L1416.7 521.8 L1416.8 519.0 L1416.8 506.3 L1416.9 517.2 L1416.9 480.5 L1417.0 492.8 L1417.0 473.1 L1417.1 477.0 L1417.2 518.3 L1417.2 485.2 L1417.3 489.4 L1417.3 484.6 L1417.4 503.2 L1417.4 483.7 L1417.5 522.0 L1417.6 484.2 L1417.6 493.5 L1417.7 486.8 L1417.7 545.0 L1417.8 473.1 L1417.9 485.0 L1417.9 505.7 L1418.0 499.6 L1418.0 506.4 L1418.1 531.2 L1418.1 517.5 L1418.2 521.0 L1418.3 478.4 L1418.3 522.4 L1418.4 525.6 L1418.4 537.0 L1418.5 511.6 L1418.5 493.8 L1418.6 494.7 L1418.7 499.4 L1418.7 508.8 L1418.8 515.2 L1418.8 545.0 L1418.9 492.9 L1418.9 498.3 L1419.0 491.1 L1419.1 532.4 L1419.1 515.9 L1419.2 527.5 L1419.2 503.3 L1419.3 520.4 L1419.3 507.7 L1419.4 503.6 L1419.5 488.1 L1419.5 508.9 L1419.6 536.3 L1419.6 531.4 L1419.7 545.0 L1419.7 490.6 L1419.8 530.2 L1419.9 492.7 L1419.9 545.0 L1420.0 499.7 L1420.0 511.3 L1420.1 515.1 L1420.1 492.7 L1420.2 511.4 L1420.2 492.8 L1420.3 508.9 L1420.4 509.6 L1420.4 511.7 L1420.5 482.7 L1420.5 476.5 L1420.6 487.6 L1420.6 502.3 L1420.7 511.4 L1420.8 516.5 L1420.8 485.3 L1420.9 499.0 L1420.9 500.4 L1421.0 485.1 L1421.0 496.4 L1421.1 479.5 L1421.1 491.8 L1421.2 519.3 L1421.3 493.9 L1421.3 490.2 L1421.4 488.7 L1421.4 506.6 L1421.5 489.9 L1421.5 485.4 L1421.6 498.2 L1421.7 505.9 L1421.7 483.2 L1421.8 524.1 L1421.8 544.9 L1421.9 513.9 L1421.9 518.4 L1422.0 497.7 L1422.0 486.5 L1422.1 519.1 L1422.2 498.4 L1422.2 492.1 L1422.3 491.9 L1422.3 497.8 L1422.4 502.1 L1422.4 482.2 L1422.5 522.8 L1422.5 479.9 L1422.6 487.0 L1422.7 513.6 L1422.7 487.1 L1422.8 490.1 L1422.8 501.0 L1422.9 483.9 L1422.9 502.2 L1423.0 505.8 L1423.0 492.4 L1423.1 506.2 L1423.2 545.0 L1423.2 486.9 L1423.3 504.6 L1423.3 490.1 L1423.4 492.0 L1423.4 494.3 L1423.5 502.1 L1423.5 484.7 L1423.6 496.5 L1423.6 511.3 L1423.7 487.6 L1423.8 503.0 L1423.8 476.8 L1423.9 504.4 L1423.9 502.6 L1424.0 505.4 L1424.0 503.9 L1424.1 510.8 L1424.1 520.6 L1424.2 516.0 L1424.3 498.7 L1424.3 491.0 L1424.4 508.3 L1424.4 485.6 L1424.5 481.5 L1424.5 489.1 L1424.6 516.7 L1424.6 538.8 L1424.7 512.6 L1424.7 541.2 L1424.8 503.3 L1424.9 541.3 L1424.9 545.0 L1425.0 492.8 L1425.0 492.2 L1425.1 502.5 L1425.1 545.0 L1425.2 500.6 L1425.2 512.2 L1425.3 499.4 L1425.3 523.2 L1425.4 509.3 L1425.5 502.7 L1425.5 514.8 L1425.6 494.2 L1425.6 545.0 L1425.7 489.5 L1425.7 508.2 L1425.8 484.2 L1425.8 491.1 L1425.9 502.8 L1425.9 530.3 L1426.0 526.8 L1426.0 495.6 L1426.1 501.2 L1426.2 534.5 L1426.2 479.5 L1426.3 496.6 L1426.3 528.2 L1426.4 506.3 L1426.4 522.0 L1426.5 505.6 L1426.5 494.8 L1426.6 508.9 L1426.6 532.2 L1426.7 492.7 L1426.7 532.0 L1426.8 492.2 L1426.9 495.5 L1426.9 500.0 L1427.0 513.7 L1427.0 517.5 L1427.1 504.2 L1427.1 521.8 L1427.2 504.4 L1427.2 515.6 L1427.3 492.4 L1427.3 520.8 L1427.4 502.7 L1427.4 493.7 L1427.5 545.0 L1427.5 494.9 L1427.6 500.1 L1427.7 519.6 L1427.7 494.6 L1427.8 496.4 L1427.8 490.5 L1427.9 502.6 L1427.9 509.4 L1428.0 509.2 L1428.0 515.8 L1428.1 492.6 L1428.1 480.5 L1428.2 492.0 L1428.2 545.0 L1428.3 525.6 L1428.3 512.2 L1428.4 545.0 L1428.5 520.0 L1428.5 496.4 L1428.6 510.7 L1428.6 530.1 L1428.7 494.0 L1428.7 507.8 L1428.8 497.2 L1428.8 476.8 L1428.9 515.7 L1428.9 495.5 L1429.0 516.7 L1429.0 481.3 L1429.1 540.1 L1429.1 491.9 L1429.2 507.5 L1429.2 503.2 L1429.3 496.9 L1429.3 488.2 L1429.4 488.7 L1429.5 516.1 L1429.5 522.4 L1429.6 500.4 L1429.6 494.0 L1429.7 509.4 L1429.7 492.4 L1429.8 502.2 L1429.8 496.0 L1429.9 523.5 L1429.9 510.7 L1430.0 517.0 L1430.0 522.7 L1430.1 489.2 L1430.1 509.9 L1430.2 494.5 L1430.2 490.2 L1430.3 496.7 L1430.3 504.0 L1430.4 518.3 L1430.4 518.3 L1430.5 498.9 L1430.6 516.4 L1430.6 534.9 L1430.7 499.8 L1430.7 497.8 L1430.8 496.3 L1430.8 526.2 L1430.9 545.0 L1430.9 499.9 L1431.0 518.4 L1431.0 512.4 L1431.1 486.3 L1431.1 493.1 L1431.2 531.8 L1431.2 495.3 L1431.3 507.9 L1431.3 502.2 L1431.4 509.0 L1431.4 490.7 L1431.5 503.2 L1431.5 497.9 L1431.6 496.6 L1431.6 506.9 L1431.7 522.0 L1431.7 505.7 L1431.8 541.5 L1431.8 490.9 L1431.9 514.2 L1431.9 485.5 L1432.0 536.9 L1432.1 506.7 L1432.1 500.1 L1432.2 520.9 L1432.2 505.6 L1432.3 503.9 L1432.3 545.0 L1432.4 499.8 L1432.4 492.9 L1432.5 488.8 L1432.5 509.7 L1432.6 494.7 L1432.6 522.2 L1432.7 501.9 L1432.7 498.1 L1432.8 492.1 L1432.8 520.6 L1432.9 536.5 L1432.9 545.0 L1433.0 500.1 L1433.0 519.2 L1433.1 492.9 L1433.1 545.0 L1433.2 526.3 L1433.2 498.6 L1433.3 507.5 L1433.3 494.1 L1433.4 501.6 L1433.4 521.2 L1433.5 496.0 L1433.5 527.2 L1433.6 512.2 L1433.6 522.6 L1433.7 536.2 L1433.7 502.0 L1433.8 527.1 L1433.8 503.6 L1433.9 503.1 L1433.9 492.3 L1434.0 538.0 L1434.0 515.3 L1434.1 522.3 L1434.1 539.9 L1434.2 545.0 L1434.2 522.4 L1434.3 499.3 L1434.3 504.5 L1434.4 493.8 L1434.4 502.8 L1434.5 503.2 L1434.5 530.3 L1434.6 494.2 L1434.6 521.9 L1434.7 516.5 L1434.7 532.9 L1434.8 507.7 L1434.9 524.7 L1434.9 532.9 L1435.0 503.2 L1435.0 492.2 L1435.1 485.5 L1435.1 498.7 L1435.2 490.0 L1435.2 497.5 L1435.3 505.8 L1435.3 545.0 L1435.4 515.9 L1435.4 508.7 L1435.5 521.6 L1435.5 533.8 L1435.6 492.9 L1435.6 529.0 L1435.7 509.3 L1435.7 534.7 L1435.8 498.2 L1435.8 504.6 L1435.9 519.5 L1435.9 539.9 L1436.0 514.2 L1436.0 520.9 L1436.1 492.3 L1436.1 528.5 L1436.2 504.5 L1436.2 522.8 L1436.3 498.9 L1436.3 545.0 L1436.4 505.6 L1436.4 543.2 L1436.5 502.5 L1436.5 522.1 L1436.6 512.5 L1436.6 518.4 L1436.6 545.0 L1436.7 513.2 L1436.7 497.6 L1436.8 512.8 L1436.8 533.8 L1436.9 542.3 L1436.9 486.1 L1437.0 538.0 L1437.0 545.0 L1437.1 544.2 L1437.1 495.8 L1437.2 527.6 L1437.2 515.4 L1437.3 501.9 L1437.3 511.5 L1437.4 493.0 L1437.4 504.5 L1437.5 523.7 L1437.5 501.2 L1437.6 497.6 L1437.6 539.2 L1437.7 514.9 L1437.7 523.9 L1437.8 521.5 L1437.8 531.1 L1437.9 490.1 L1437.9 508.9 L1438.0 491.6 L1438.0 519.7 L1438.1 509.7 L1438.1 545.0 L1438.2 525.3 L1438.2 499.1 L1438.3 507.8 L1438.3 503.5 L1438.4 500.0 L1438.4 498.9 L1438.5 511.7 L1438.5 510.7 L1438.6 545.0 L1438.6 545.0 L1438.7 499.3 L1438.7 358.0 L1438.8 358.0 L1438.8 358.0 L1438.9 358.0 L1438.9 358.0 L1439.0 358.0 L1439.0 358.0 L1439.1 358.0 L1439.1 358.0 L1439.2 358.0 L1439.2 358.0 L1439.3 358.0 L1439.3 519.6 L1439.3 545.0 L1439.4 506.6 L1439.4 527.9 L1439.5 520.5 L1439.5 545.0 L1439.6 508.2 L1439.6 495.6 L1439.7 528.8 L1439.7 505.1 L1439.8 512.1 L1439.8 539.0 L1439.9 513.7 L1439.9 518.7 L1440.0 505.6 L1440.0 517.2 L1440.1 502.7 L1440.1 507.8 L1440.2 541.9 L1440.2 503.2 L1440.3 530.7 L1440.3 521.4 L1440.4 499.6 L1440.4 529.2 L1440.5 501.2 L1440.5 502.7 L1440.6 523.1 L1440.6 545.0 L1440.7 543.5 L1440.7 544.1 L1440.7 499.5 L1440.8 534.2 L1440.8 494.1 L1440.9 525.2 L1440.9 545.0 L1441.0 491.2 L1441.0 487.1 L1441.1 518.0 L1441.1 497.9 L1441.2 516.9 L1441.2 545.0 L1441.3 545.0 L1441.3 507.5 L1441.4 501.1 L1441.4 545.0 L1441.5 498.5 L1441.5 497.3 L1441.6 523.9 L1441.6 513.2 L1441.7 488.7 L1441.7 527.7 L1441.8 509.9 L1441.8 516.4 L1441.8 507.6 L1441.9 534.0 L1441.9 514.5 L1442.0 498.3 L1442.0 521.0 L1442.1 528.5 L1442.1 512.4 L1442.2 528.2 L1442.2 519.7 L1442.3 523.2 L1442.3 545.0 L1442.4 544.5 L1442.4 504.3 L1442.5 502.3 L1442.5 527.6 L1442.6 530.0 L1442.6 520.6 L1442.7 525.0 L1442.7 516.6 L1442.8 533.6 L1442.8 502.5 L1442.8 492.8 L1442.9 524.9 L1442.9 525.2 L1443.0 540.2 L1443.0 508.5 L1443.1 493.1 L1443.1 494.1 L1443.2 494.7 L1443.2 509.0 L1443.3 501.6 L1443.3 518.3 L1443.4 511.1 L1443.4 499.7 L1443.5 502.4 L1443.5 542.4 L1443.6 545.0 L1443.6 514.5 L1443.6 524.8 L1443.7 534.1 L1443.7 545.0 L1443.8 494.8 L1443.8 496.3 L1443.9 490.2 L1443.9 513.0 L1444.0 495.5 L1444.0 506.2 L1444.1 529.1 L1444.1 510.3 L1444.2 532.6 L1444.2 488.0 L1444.3 509.9 L1444.3 522.7 L1444.3 544.8 L1444.4 495.7 L1444.4 494.7 L1444.5 511.1 L1444.5 497.0 L1444.6 510.0 L1444.6 500.9 L1444.7 499.6 L1444.7 516.1 L1444.8 525.4 L1444.8 512.4 L1444.9 508.6 L1444.9 540.9 L1445.0 519.7 L1445.0 500.0 L1445.0 529.5 L1445.1 542.6 L1445.1 519.7 L1445.2 507.0 L1445.2 495.4 L1445.3 510.6 L1445.3 505.5 L1445.4 524.6 L1445.4 496.7 L1445.5 505.4 L1445.5 545.0 L1445.6 514.4 L1445.6 506.1 L1445.6 503.2 L1445.7 498.6 L1445.7 502.0 L1445.8 513.5 L1445.8 519.6 L1445.9 545.0 L1445.9 512.6 L1446.0 518.7 L1446.0 515.4 L1446.1 545.0 L1446.1 545.0 L1446.2 482.8 L1446.2 498.5 L1446.2 494.1 L1446.3 518.6 L1446.3 543.0 L1446.4 519.1 L1446.4 478.1 L1446.5 507.5 L1446.5 502.9 L1446.6 482.3 L1446.6 538.5 L1446.7 529.2 L1446.7 498.2 L1446.8 530.0 L1446.8 544.0 L1446.8 535.3 L1446.9 503.3 L1446.9 506.5 L1447.0 490.4 L1447.0 545.0 L1447.1 523.0 L1447.1 495.5 L1447.2 517.9 L1447.2 545.0 L1447.3 515.9 L1447.3 496.1 L1447.3 512.5 L1447.4 538.0 L1447.4 495.0 L1447.5 495.4 L1447.5 527.0 L1447.6 510.3 L1447.6 512.9 L1447.7 512.1 L1447.7 489.4 L1447.8 499.4 L1447.8 499.6 L1447.8 499.6 L1447.9 509.2 L1447.9 503.4 L1448.0 498.7 L1448.0 529.9 L1448.1 510.2 L1448.1 514.7 L1448.2 490.3 L1448.2 503.2 L1448.3 517.0 L1448.3 502.2 L1448.3 544.7 L1448.4 495.4 L1448.4 502.8 L1448.5 520.1 L1448.5 496.0 L1448.6 493.6 L1448.6 516.8 L1448.7 515.6 L1448.7 510.2 L1448.8 492.4 L1448.8 520.7 L1448.8 496.0 L1448.9 507.1 L1448.9 491.6 L1449.0 479.0 L1449.0 505.6 L1449.1 491.3 L1449.1 545.0 L1449.2 500.3 L1449.2 498.4 L1449.2 518.9 L1449.3 495.2 L1449.3 511.6 L1449.4 540.9 L1449.4 509.8 L1449.5 497.0 L1449.5 509.5 L1449.6 501.2 L1449.6 527.6 L1449.6 494.4 L1449.7 493.6 L1449.7 519.2 L1449.8 545.0 L1449.8 520.3 L1449.9 492.7 L1449.9 488.4 L1450.0 520.7 L1450.0 519.0 L1450.1 520.0 L1450.1 545.0 L1450.1 478.7 L1450.2 520.9 L1450.2 515.8 L1450.3 533.3 L1450.3 492.7 L1450.4 517.6 L1450.4 487.1 L1450.5 533.6 L1450.5 502.0 L1450.5 525.0 L1450.6 513.3 L1450.6 516.1 L1450.7 512.2 L1450.7 510.1 L1450.8 502.7 L1450.8 509.8 L1450.9 497.9 L1450.9 509.4 L1450.9 505.9 L1451.0 496.2 L1451.0 500.1 L1451.1 519.2 L1451.1 510.0 L1451.2 541.5 L1451.2 504.1 L1451.2 505.2 L1451.3 527.5 L1451.3 520.9 L1451.4 507.1 L1451.4 501.3 L1451.5 522.4 L1451.5 497.0 L1451.6 524.6 L1451.6 517.5 L1451.6 518.5 L1451.7 488.5 L1451.7 485.5 L1451.8 510.1 L1451.8 545.0 L1451.9 497.9 L1451.9 491.8 L1452.0 521.1 L1452.0 503.6 L1452.0 508.4 L1452.1 536.0 L1452.1 532.3 L1452.2 505.7 L1452.2 545.0 L1452.3 494.5 L1452.3 540.5 L1452.3 502.0 L1452.4 535.3 L1452.4 496.1 L1452.5 503.7 L1452.5 537.1 L1452.6 504.6 L1452.6 498.8 L1452.7 504.3 L1452.7 481.2 L1452.7 522.5 L1452.8 517.4 L1452.8 495.8 L1452.9 517.1 L1452.9 500.3 L1453.0 530.7" fill="none" stroke="#00ff00" stroke-width="1" shape-rendering="crispEdges"/>
<path d="M1239.4 57.6V250" stroke="#00ff00" stroke-width="2" shape-rendering="crispEdges"/>
<g shape-rendering="crispEdges">
<rect x="1159" y="45" width="295" height="1" fill="#c0c0c0"/>
<rect x="1167" y="45" width="1" height="507" fill="#c0c0c0"/>
<rect x="1159" y="545" width="295" height="1" fill="#c0c0c0"/>
<rect x="1453" y="45" width="1" height="501" fill="#c0c0c0"/>
<rect x="1159" y="45" width="9" height="1" fill="#c0c0c0"/>
<rect x="1159" y="95" width="9" height="1" fill="#c0c0c0"/>
<rect x="1159" y="145" width="9" height="1" fill="#c0c0c0"/>
<rect x="1159" y="195" width="9" height="1" fill="#c0c0c0"/>
<rect x="1159" y="245" width="9" height="1" fill="#c0c0c0"/>
<rect x="1159" y="295" width="9" height="1" fill="#c0c0c0"/>
<rect x="1159" y="345" width="9" height="1" fill="#c0c0c0"/>
<rect x="1159" y="395" width="9" height="1" fill="#c0c0c0"/>
<rect x="1159" y="445" width="9" height="1" fill="#c0c0c0"/>
<rect x="1159" y="495" width="9" height="1" fill="#c0c0c0"/>
<rect x="1159" y="545" width="9" height="1" fill="#c0c0c0"/>
<rect x="1247" y="545" width="1" height="7" fill="#c0c0c0"/>
<rect x="1330" y="545" width="1" height="7" fill="#c0c0c0"/>
<rect x="1398" y="545" width="1" height="7" fill="#c0c0c0"/>
</g>
<text x="1158.7" y="49.8" font-size="13.1" fill="#c0c0c0" textLength="33" lengthAdjust="spacingAndGlyphs" text-anchor="end" stroke="#c0c0c0" stroke-width="0.2">10dB</text>
<text x="1158.7" y="99.8" font-size="13.1" fill="#c0c0c0" textLength="25" lengthAdjust="spacingAndGlyphs" text-anchor="end" stroke="#c0c0c0" stroke-width="0.2">0dB</text>
<text x="1158.7" y="149.8" font-size="13.1" fill="#c0c0c0" textLength="37.5" lengthAdjust="spacingAndGlyphs" text-anchor="end" stroke="#c0c0c0" stroke-width="0.2">-10dB</text>
<text x="1158.7" y="199.8" font-size="13.1" fill="#c0c0c0" textLength="37.5" lengthAdjust="spacingAndGlyphs" text-anchor="end" stroke="#c0c0c0" stroke-width="0.2">-20dB</text>
<text x="1158.7" y="249.8" font-size="13.1" fill="#c0c0c0" textLength="37.5" lengthAdjust="spacingAndGlyphs" text-anchor="end" stroke="#c0c0c0" stroke-width="0.2">-30dB</text>
<text x="1158.7" y="299.8" font-size="13.1" fill="#c0c0c0" textLength="37.5" lengthAdjust="spacingAndGlyphs" text-anchor="end" stroke="#c0c0c0" stroke-width="0.2">-40dB</text>
<text x="1158.7" y="349.8" font-size="13.1" fill="#c0c0c0" textLength="37.5" lengthAdjust="spacingAndGlyphs" text-anchor="end" stroke="#c0c0c0" stroke-width="0.2">-50dB</text>
<text x="1158.7" y="399.8" font-size="13.1" fill="#c0c0c0" textLength="37.5" lengthAdjust="spacingAndGlyphs" text-anchor="end" stroke="#c0c0c0" stroke-width="0.2">-60dB</text>
<text x="1158.7" y="449.8" font-size="13.1" fill="#c0c0c0" textLength="37.5" lengthAdjust="spacingAndGlyphs" text-anchor="end" stroke="#c0c0c0" stroke-width="0.2">-70dB</text>
<text x="1158.7" y="499.8" font-size="13.1" fill="#c0c0c0" textLength="37.5" lengthAdjust="spacingAndGlyphs" text-anchor="end" stroke="#c0c0c0" stroke-width="0.2">-80dB</text>
<text x="1158.7" y="549.8" font-size="13.1" fill="#c0c0c0" textLength="37.5" lengthAdjust="spacingAndGlyphs" text-anchor="end" stroke="#c0c0c0" stroke-width="0.2">-90dB</text>
<text x="1166" y="565.3" font-size="13.2" fill="#c0c0c0" textLength="45.8" lengthAdjust="spacingAndGlyphs" text-anchor="middle" stroke="#c0c0c0" stroke-width="0.2">6.0KHz</text>
<text x="1246.3" y="565.3" font-size="13.2" fill="#c0c0c0" textLength="53.5" lengthAdjust="spacingAndGlyphs" text-anchor="middle" stroke="#c0c0c0" stroke-width="0.2">11.4KHz</text>
<text x="1329.2" y="565.3" font-size="13.2" fill="#c0c0c0" textLength="53.6" lengthAdjust="spacingAndGlyphs" text-anchor="middle" stroke="#c0c0c0" stroke-width="0.2">22.2KHz</text>
<text x="1397.3" y="565.3" font-size="13.2" fill="#c0c0c0" textLength="53.1" lengthAdjust="spacingAndGlyphs" text-anchor="middle" stroke="#c0c0c0" stroke-width="0.2">38.4KHz</text>
<text x="1283.8" y="39.5" font-size="13.5" font-weight="bold" fill="#00ff00" textLength="50.6" lengthAdjust="spacingAndGlyphs">V(tank+)</text>
</g>
<g shape-rendering="crispEdges">
<rect x="576" y="3" width="538" height="573" fill="#d4d0c8"/>
<rect x="577" y="4" width="536" height="1" fill="#ffffff"/>
<rect x="577" y="4" width="1" height="571" fill="#ffffff"/>
<rect x="576" y="575" width="538" height="1" fill="#404040"/>
<rect x="1113" y="3" width="1" height="573" fill="#404040"/>
<rect x="577" y="574" width="536" height="1" fill="#808080"/>
<rect x="1112" y="4" width="1" height="571" fill="#808080"/>
<rect x="580" y="7" width="530" height="18" fill="url(#gi)"/>
<rect x="580" y="26" width="530" height="1" fill="#808080"/>
<rect x="580" y="26" width="1" height="546" fill="#808080"/>
<rect x="581" y="27" width="528" height="1" fill="#404040"/>
<rect x="581" y="27" width="1" height="544" fill="#404040"/>
<rect x="580" y="571" width="530" height="1" fill="#ffffff"/>
<rect x="1109" y="26" width="1" height="546" fill="#ffffff"/>
<rect x="581" y="570" width="528" height="1" fill="#d4d0c8"/>
<rect x="1108" y="27" width="1" height="544" fill="#d4d0c8"/>
<rect x="582" y="28" width="526" height="542" fill="#050305"/>
<text x="600" y="20" font-size="11" font-weight="bold" fill="#d4d0c8" textLength="142" lengthAdjust="spacingAndGlyphs">4046_LC_quadrature.raw</text>
<rect x="1092" y="9" width="16" height="14" fill="#d4d0c8"/>
<rect x="1092" y="9" width="16" height="1" fill="#ffffff"/>
<rect x="1092" y="9" width="1" height="14" fill="#ffffff"/>
<rect x="1092" y="22" width="16" height="1" fill="#404040"/>
<rect x="1107" y="9" width="1" height="14" fill="#404040"/>
<rect x="1093" y="21" width="14" height="1" fill="#808080"/>
<rect x="1106" y="10" width="1" height="12" fill="#808080"/>
<path d="M1096.6 12.6L1103.4 18.9M1103.4 12.6L1096.6 18.9" stroke="#000" stroke-width="1.9" shape-rendering="geometricPrecision"/>
<rect x="1074" y="9" width="16" height="14" fill="#d4d0c8"/>
<rect x="1074" y="9" width="16" height="1" fill="#ffffff"/>
<rect x="1074" y="9" width="1" height="14" fill="#ffffff"/>
<rect x="1074" y="22" width="16" height="1" fill="#404040"/>
<rect x="1089" y="9" width="1" height="14" fill="#404040"/>
<rect x="1075" y="21" width="14" height="1" fill="#808080"/>
<rect x="1088" y="10" width="1" height="12" fill="#808080"/>
<rect x="1077" y="11" width="9" height="9" fill="#000"/>
<rect x="1078" y="13" width="7" height="6" fill="#d4d0c8"/>
<rect x="1058" y="9" width="16" height="14" fill="#d4d0c8"/>
<rect x="1058" y="9" width="16" height="1" fill="#ffffff"/>
<rect x="1058" y="9" width="1" height="14" fill="#ffffff"/>
<rect x="1058" y="22" width="16" height="1" fill="#404040"/>
<rect x="1073" y="9" width="1" height="14" fill="#404040"/>
<rect x="1059" y="21" width="14" height="1" fill="#808080"/>
<rect x="1072" y="10" width="1" height="12" fill="#808080"/>
<rect x="1062" y="18" width="6" height="2" fill="#000"/>
<rect x="585" y="8" width="13" height="13" fill="#c0c0c0"/>
<rect x="582" y="8" width="2" height="16" fill="#ffffff"/>
<rect x="582" y="22" width="16" height="2" fill="#ffffff"/>
<rect x="582" y="9" width="3" height="1" fill="#000"/>
<rect x="582" y="12" width="3" height="1" fill="#000"/>
<rect x="582" y="15" width="3" height="1" fill="#000"/>
<rect x="582" y="18" width="3" height="1" fill="#000"/>
<rect x="582" y="21" width="3" height="1" fill="#000"/>
<rect x="582" y="24" width="3" height="1" fill="#000"/>
<rect x="584" y="8" width="1" height="16" fill="#000"/>
<rect x="582" y="21" width="16" height="1" fill="#000"/>
<rect x="584" y="22" width="1" height="2" fill="#000"/>
<rect x="587" y="22" width="1" height="2" fill="#000"/>
<rect x="590" y="22" width="1" height="2" fill="#000"/>
<rect x="593" y="22" width="1" height="2" fill="#000"/>
<rect x="596" y="22" width="1" height="2" fill="#000"/>
<path d="M585 16.5L588.5 12.5L590.5 12.5L592.5 15.3L594.5 15.3L597.8 11.5" stroke="#ff0000" stroke-width="2" fill="none"/>
</g>
<g clip-path="url(#cb)">
<g>
<path d="M610 108.5H1090" stroke="#a8a8a8" stroke-width="1" stroke-dasharray="3 3" shape-rendering="crispEdges"/>
<path d="M610 171.5H1090" stroke="#a8a8a8" stroke-width="1" stroke-dasharray="3 3" shape-rendering="crispEdges"/>
<path d="M610 233.5H1090" stroke="#a8a8a8" stroke-width="1" stroke-dasharray="3 3" shape-rendering="crispEdges"/>
<path d="M610 295.5H1090" stroke="#a8a8a8" stroke-width="1" stroke-dasharray="3 3" shape-rendering="crispEdges"/>
<path d="M610 357.5H1090" stroke="#a8a8a8" stroke-width="1" stroke-dasharray="3 3" shape-rendering="crispEdges"/>
<path d="M610 420.5H1090" stroke="#a8a8a8" stroke-width="1" stroke-dasharray="3 3" shape-rendering="crispEdges"/>
<path d="M610 482.5H1090" stroke="#a8a8a8" stroke-width="1" stroke-dasharray="3 3" shape-rendering="crispEdges"/>
<path d="M658.5 50V544" stroke="#a8a8a8" stroke-width="1" stroke-dasharray="3 3" shape-rendering="crispEdges"/>
<path d="M706.5 50V544" stroke="#a8a8a8" stroke-width="1" stroke-dasharray="3 3" shape-rendering="crispEdges"/>
<path d="M754.5 50V544" stroke="#a8a8a8" stroke-width="1" stroke-dasharray="3 3" shape-rendering="crispEdges"/>
<path d="M802.5 50V544" stroke="#a8a8a8" stroke-width="1" stroke-dasharray="3 3" shape-rendering="crispEdges"/>
<path d="M850.5 50V544" stroke="#a8a8a8" stroke-width="1" stroke-dasharray="3 3" shape-rendering="crispEdges"/>
<path d="M898.5 50V544" stroke="#a8a8a8" stroke-width="1" stroke-dasharray="3 3" shape-rendering="crispEdges"/>
<path d="M946.5 50V544" stroke="#a8a8a8" stroke-width="1" stroke-dasharray="3 3" shape-rendering="crispEdges"/>
<path d="M994.5 50V544" stroke="#a8a8a8" stroke-width="1" stroke-dasharray="3 3" shape-rendering="crispEdges"/>
<path d="M1042.5 50V544" stroke="#a8a8a8" stroke-width="1" stroke-dasharray="3 3" shape-rendering="crispEdges"/>
</g>
<path d="M611.0 242.0 L613.0 228.0 L615.8 211.0 L617.5 227.0 L619.0 234.5 L622.0 252.0 L624.0 242.0 L627.6 233.3 L630.0 236.6 L634.3 243.0 L640.5 238.0 L645.0 239.8 L660.0 239.5 L676.0 238.7 L679.5 236.5 L679.9 235.6 L680.3 234.6 L680.6 233.4 L680.9 232.0 L681.2 230.2 L681.5 228.0 L681.8 225.4 L682.2 222.3 L682.5 218.9 L682.8 215.3 L683.2 211.4 L683.7 207.5 L684.3 203.3 L684.9 198.9 L685.6 194.2 L686.3 189.5 L687.0 184.9 L687.6 180.6 L688.1 176.7 L688.6 173.0 L689.0 169.5 L689.4 165.8 L689.9 161.9 L690.4 157.6 L691.0 152.6 L691.6 147.1 L692.3 141.3 L693.0 135.5 L693.7 130.0 L694.3 125.0 L694.9 120.6 L695.4 116.5 L695.8 112.7 L696.3 109.1 L696.9 105.7 L697.5 102.3 L698.2 99.1 L699.0 96.0 L699.9 93.0 L700.7 90.2 L701.6 87.6 L702.5 85.0 L703.4 82.5 L704.2 80.1 L705.1 77.9 L706.0 75.8 L707.0 73.8 L708.0 72.0 L709.0 70.4 L710.1 69.0 L711.2 67.7 L712.3 66.6 L713.6 65.5 L715.0 64.5 L716.5 63.5 L718.2 62.6 L720.0 61.8 L721.8 61.1 L723.8 60.4 L725.8 59.8 L727.9 59.3 L730.0 58.8 L732.2 58.5 L734.6 58.2 L737.1 57.9 L739.8 57.7 L739.2 57.6 L734.6 57.5 L730.1 57.5 L730.0 57.5 L738.6 57.5 L760.0 57.5 L1091.0 57.5 L1091.0 532.5 L760.0 532.5 L738.6 532.5 L730.0 532.5 L730.1 532.5 L734.6 532.5 L739.2 532.4 L739.8 532.3 L737.1 532.1 L734.6 531.8 L732.2 531.5 L730.0 531.2 L727.9 530.7 L725.8 530.2 L723.8 529.6 L721.8 528.9 L720.0 528.2 L718.2 527.4 L716.5 526.5 L715.0 525.5 L713.6 524.5 L712.3 523.4 L711.2 522.3 L710.1 521.0 L709.0 519.6 L708.0 518.0 L707.0 516.2 L706.0 514.2 L705.1 512.1 L704.2 509.9 L703.4 507.5 L702.5 505.0 L701.6 502.4 L700.7 499.8 L699.9 497.0 L699.0 494.0 L698.2 490.9 L697.5 487.7 L696.9 484.3 L696.3 480.9 L695.8 477.3 L695.4 473.5 L694.9 469.4 L694.3 465.0 L693.7 460.0 L693.0 454.5 L692.3 448.7 L691.6 442.9 L691.0 437.4 L690.4 432.4 L689.9 428.1 L689.4 424.2 L689.0 420.5 L688.6 417.0 L688.1 413.3 L687.6 409.4 L687.0 405.1 L686.3 400.5 L685.6 395.8 L684.9 391.1 L684.3 386.7 L683.7 382.5 L683.2 378.6 L682.8 374.7 L682.5 371.1 L682.2 367.7 L681.8 364.6 L681.5 362.0 L681.2 359.8 L680.9 358.0 L680.6 356.6 L680.3 355.4 L679.9 354.4 L679.5 353.5 L676.0 351.3 L660.0 350.5 L645.0 350.2 L640.5 352.0 L634.3 347.0 L630.0 353.4 L627.6 356.7 L624.0 348.0 L622.0 338.0 L619.0 355.5 L617.5 363.0 L615.8 379.0 L613.0 362.0 L611.0 348.0Z" fill="#ac8003"/>
<path d="M610.5 108.6 L617.5 118.2 L625.2 131.7 L634.8 145.1 L644.4 158.6 L654.0 170.1 L663.6 180.6 L673.2 190.2 L682.8 197.9 L692.4 203.1 L702.0 204.1 L711.6 203.3 L1090.0 203.3" fill="none" stroke="#00ff00" stroke-width="1.5"/>
<g shape-rendering="crispEdges">
<rect x="602" y="46" width="489" height="1" fill="#c0c0c0"/>
<rect x="610" y="46" width="1" height="506" fill="#c0c0c0"/>
<rect x="602" y="544" width="489" height="1" fill="#c0c0c0"/>
<rect x="1090" y="46" width="1" height="13" fill="#c0c0c0"/>
<rect x="1090" y="532" width="1" height="20" fill="#c0c0c0"/>
<rect x="602" y="46" width="9" height="1" fill="#c0c0c0"/>
<rect x="602" y="108" width="9" height="1" fill="#c0c0c0"/>
<rect x="602" y="171" width="9" height="1" fill="#c0c0c0"/>
<rect x="602" y="233" width="9" height="1" fill="#c0c0c0"/>
<rect x="602" y="295" width="9" height="1" fill="#c0c0c0"/>
<rect x="602" y="357" width="9" height="1" fill="#c0c0c0"/>
<rect x="602" y="420" width="9" height="1" fill="#c0c0c0"/>
<rect x="602" y="482" width="9" height="1" fill="#c0c0c0"/>
<rect x="602" y="544" width="9" height="1" fill="#c0c0c0"/>
<rect x="610" y="544" width="1" height="8" fill="#c0c0c0"/>
<rect x="658" y="544" width="1" height="8" fill="#c0c0c0"/>
<rect x="706" y="544" width="1" height="8" fill="#c0c0c0"/>
<rect x="754" y="544" width="1" height="8" fill="#c0c0c0"/>
<rect x="802" y="544" width="1" height="8" fill="#c0c0c0"/>
<rect x="850" y="544" width="1" height="8" fill="#c0c0c0"/>
<rect x="898" y="544" width="1" height="8" fill="#c0c0c0"/>
<rect x="946" y="544" width="1" height="8" fill="#c0c0c0"/>
<rect x="994" y="544" width="1" height="8" fill="#c0c0c0"/>
<rect x="1042" y="544" width="1" height="8" fill="#c0c0c0"/>
<rect x="1090" y="544" width="1" height="8" fill="#c0c0c0"/>
</g>
<text x="601.5" y="50.6" font-size="12.4" fill="#c0c0c0" textLength="14.6" lengthAdjust="spacingAndGlyphs" text-anchor="end" stroke="#c0c0c0" stroke-width="0.2">8V</text>
<text x="601.5" y="112.6" font-size="12.4" fill="#c0c0c0" textLength="14.6" lengthAdjust="spacingAndGlyphs" text-anchor="end" stroke="#c0c0c0" stroke-width="0.2">6V</text>
<text x="601.5" y="175.6" font-size="12.4" fill="#c0c0c0" textLength="14.6" lengthAdjust="spacingAndGlyphs" text-anchor="end" stroke="#c0c0c0" stroke-width="0.2">4V</text>
<text x="601.5" y="237.6" font-size="12.4" fill="#c0c0c0" textLength="14.6" lengthAdjust="spacingAndGlyphs" text-anchor="end" stroke="#c0c0c0" stroke-width="0.2">2V</text>
<text x="601.5" y="299.6" font-size="12.4" fill="#c0c0c0" textLength="14.6" lengthAdjust="spacingAndGlyphs" text-anchor="end" stroke="#c0c0c0" stroke-width="0.2">0V</text>
<text x="601.5" y="361.6" font-size="12.4" fill="#c0c0c0" textLength="19" lengthAdjust="spacingAndGlyphs" text-anchor="end" stroke="#c0c0c0" stroke-width="0.2">-2V</text>
<text x="601.5" y="424.6" font-size="12.4" fill="#c0c0c0" textLength="19" lengthAdjust="spacingAndGlyphs" text-anchor="end" stroke="#c0c0c0" stroke-width="0.2">-4V</text>
<text x="601.5" y="486.6" font-size="12.4" fill="#c0c0c0" textLength="19" lengthAdjust="spacingAndGlyphs" text-anchor="end" stroke="#c0c0c0" stroke-width="0.2">-6V</text>
<text x="601.5" y="548.6" font-size="12.4" fill="#c0c0c0" textLength="19" lengthAdjust="spacingAndGlyphs" text-anchor="end" stroke="#c0c0c0" stroke-width="0.2">-8V</text>
<text x="610" y="564.8" font-size="13.2" fill="#c0c0c0" textLength="26" lengthAdjust="spacingAndGlyphs" text-anchor="middle" stroke="#c0c0c0" stroke-width="0.2">0ms</text>
<text x="658" y="564.8" font-size="13.2" fill="#c0c0c0" textLength="26" lengthAdjust="spacingAndGlyphs" text-anchor="middle" stroke="#c0c0c0" stroke-width="0.2">5ms</text>
<text x="706" y="564.8" font-size="13.2" fill="#c0c0c0" textLength="34.6" lengthAdjust="spacingAndGlyphs" text-anchor="middle" stroke="#c0c0c0" stroke-width="0.2">10ms</text>
<text x="754" y="564.8" font-size="13.2" fill="#c0c0c0" textLength="34.6" lengthAdjust="spacingAndGlyphs" text-anchor="middle" stroke="#c0c0c0" stroke-width="0.2">15ms</text>
<text x="802" y="564.8" font-size="13.2" fill="#c0c0c0" textLength="34.6" lengthAdjust="spacingAndGlyphs" text-anchor="middle" stroke="#c0c0c0" stroke-width="0.2">20ms</text>
<text x="850" y="564.8" font-size="13.2" fill="#c0c0c0" textLength="34.6" lengthAdjust="spacingAndGlyphs" text-anchor="middle" stroke="#c0c0c0" stroke-width="0.2">25ms</text>
<text x="898" y="564.8" font-size="13.2" fill="#c0c0c0" textLength="34.6" lengthAdjust="spacingAndGlyphs" text-anchor="middle" stroke="#c0c0c0" stroke-width="0.2">30ms</text>
<text x="946" y="564.8" font-size="13.2" fill="#c0c0c0" textLength="34.6" lengthAdjust="spacingAndGlyphs" text-anchor="middle" stroke="#c0c0c0" stroke-width="0.2">35ms</text>
<text x="994" y="564.8" font-size="13.2" fill="#c0c0c0" textLength="34.6" lengthAdjust="spacingAndGlyphs" text-anchor="middle" stroke="#c0c0c0" stroke-width="0.2">40ms</text>
<text x="1042" y="564.8" font-size="13.2" fill="#c0c0c0" textLength="34.6" lengthAdjust="spacingAndGlyphs" text-anchor="middle" stroke="#c0c0c0" stroke-width="0.2">45ms</text>
<text x="1090" y="564.8" font-size="13.2" fill="#c0c0c0" textLength="34.6" lengthAdjust="spacingAndGlyphs" text-anchor="middle" stroke="#c0c0c0" stroke-width="0.2">50ms</text>
<text x="687" y="41" font-size="13.5" font-weight="bold" fill="#c0920c" textLength="85.3" lengthAdjust="spacingAndGlyphs">V(tank+,tank-)</text>
<text x="902.5" y="41" font-size="13.5" font-weight="bold" fill="#00ff00" textLength="134" lengthAdjust="spacingAndGlyphs">V(phase_loc_control)</text>
</g>
<g shape-rendering="crispEdges">
<rect x="2" y="3" width="576" height="574" fill="#d4d0c8"/>
<rect x="3" y="4" width="574" height="1" fill="#ffffff"/>
<rect x="3" y="4" width="1" height="572" fill="#ffffff"/>
<rect x="2" y="576" width="576" height="1" fill="#404040"/>
<rect x="577" y="3" width="1" height="574" fill="#404040"/>
<rect x="3" y="575" width="574" height="1" fill="#808080"/>
<rect x="576" y="4" width="1" height="572" fill="#808080"/>
<rect x="6" y="7" width="568" height="18" fill="url(#ga)"/>
<rect x="6" y="26" width="568" height="1" fill="#808080"/>
<rect x="6" y="26" width="1" height="547" fill="#808080"/>
<rect x="7" y="27" width="566" height="1" fill="#404040"/>
<rect x="7" y="27" width="1" height="545" fill="#404040"/>
<rect x="6" y="572" width="568" height="1" fill="#ffffff"/>
<rect x="573" y="26" width="1" height="547" fill="#ffffff"/>
<rect x="7" y="571" width="566" height="1" fill="#d4d0c8"/>
<rect x="572" y="27" width="1" height="545" fill="#d4d0c8"/>
<rect x="8" y="28" width="564" height="543" fill="#c4c2c5"/>
<text x="26" y="20" font-size="11" font-weight="bold" fill="#ffffff" textLength="140.4" lengthAdjust="spacingAndGlyphs">4046_LC_quadrature.asc</text>
<rect x="556" y="9" width="16" height="14" fill="#d4d0c8"/>
<rect x="556" y="9" width="16" height="1" fill="#ffffff"/>
<rect x="556" y="9" width="1" height="14" fill="#ffffff"/>
<rect x="556" y="22" width="16" height="1" fill="#404040"/>
<rect x="571" y="9" width="1" height="14" fill="#404040"/>
<rect x="557" y="21" width="14" height="1" fill="#808080"/>
<rect x="570" y="10" width="1" height="12" fill="#808080"/>
<path d="M560.6 12.6L567.4 18.9M567.4 12.6L560.6 18.9" stroke="#000" stroke-width="1.9" shape-rendering="geometricPrecision"/>
<rect x="538" y="9" width="16" height="14" fill="#d4d0c8"/>
<rect x="538" y="9" width="16" height="1" fill="#ffffff"/>
<rect x="538" y="9" width="1" height="14" fill="#ffffff"/>
<rect x="538" y="22" width="16" height="1" fill="#404040"/>
<rect x="553" y="9" width="1" height="14" fill="#404040"/>
<rect x="539" y="21" width="14" height="1" fill="#808080"/>
<rect x="552" y="10" width="1" height="12" fill="#808080"/>
<rect x="541" y="11" width="9" height="9" fill="#000"/>
<rect x="542" y="13" width="7" height="6" fill="#d4d0c8"/>
<rect x="522" y="9" width="16" height="14" fill="#d4d0c8"/>
<rect x="522" y="9" width="16" height="1" fill="#ffffff"/>
<rect x="522" y="9" width="1" height="14" fill="#ffffff"/>
<rect x="522" y="22" width="16" height="1" fill="#404040"/>
<rect x="537" y="9" width="1" height="14" fill="#404040"/>
<rect x="523" y="21" width="14" height="1" fill="#808080"/>
<rect x="536" y="10" width="1" height="12" fill="#808080"/>
<rect x="526" y="18" width="6" height="2" fill="#000"/>
<rect x="13" y="11" width="2" height="9" fill="#0000ff"/>
<rect x="10" y="15" width="3" height="1" fill="#0000ff"/>
<path d="M15 13L20 8M15 18L21 24" stroke="#0000ff" stroke-width="1.2" fill="none"/>
<path d="M16 21L19 19L19.5 22.5Z" fill="#0000ff"/>
<rect x="2" y="4" width="1" height="569" fill="#f4f4f0"/>
</g>
<g clip-path="url(#ca)">
<g shape-rendering="crispEdges">
<rect x="46" y="91" width="275" height="1" fill="#0000ff"/>
<rect x="320" y="91" width="1" height="134" fill="#0000ff"/>
<rect x="320" y="224" width="44" height="1" fill="#0000ff"/>
<rect x="46" y="91" width="1" height="43" fill="#0000ff"/>
<rect x="46" y="133" width="26" height="1" fill="#0000ff"/>
<rect x="154" y="133" width="59" height="1" fill="#0000ff"/>
<rect x="187" y="133" width="1" height="76" fill="#0000ff"/>
<rect x="71" y="208" width="117" height="1" fill="#0000ff"/>
<rect x="71" y="208" width="1" height="84" fill="#0000ff"/>
<rect x="71" y="291" width="42" height="1" fill="#0000ff"/>
<rect x="46" y="158" width="26" height="1" fill="#0000ff"/>
<rect x="46" y="158" width="1" height="150" fill="#0000ff"/>
<rect x="46" y="307" width="67" height="1" fill="#0000ff"/>
<rect x="46" y="199" width="150" height="1" fill="#0000ff"/>
<rect x="195" y="158" width="1" height="42" fill="#0000ff"/>
<rect x="195" y="158" width="18" height="1" fill="#0000ff"/>
<rect x="161" y="158" width="19" height="1" fill="#0000ff"/>
<rect x="179" y="158" width="1" height="18" fill="#0000ff"/>
<rect x="295" y="133" width="69" height="1" fill="#0000ff"/>
<rect x="303" y="158" width="18" height="1" fill="#0000ff"/>
<rect x="403" y="133" width="118" height="1" fill="#0000ff"/>
<rect x="520" y="133" width="1" height="35" fill="#0000ff"/>
<rect x="453" y="133" width="1" height="42" fill="#0000ff"/>
<rect x="436" y="174" width="18" height="1" fill="#0000ff"/>
<rect x="403" y="224" width="118" height="1" fill="#0000ff"/>
<rect x="520" y="199" width="1" height="26" fill="#0000ff"/>
<rect x="453" y="199" width="1" height="26" fill="#0000ff"/>
<rect x="437" y="199" width="17" height="1" fill="#0000ff"/>
<rect x="478" y="133" width="1" height="34" fill="#0000ff"/>
<rect x="478" y="208" width="1" height="17" fill="#0000ff"/>
<rect x="420" y="203" width="1" height="55" fill="#0000ff"/>
<rect x="369" y="257" width="71" height="1" fill="#0000ff"/>
<rect x="474" y="257" width="14" height="1" fill="#0000ff"/>
<rect x="104" y="224" width="126" height="1" fill="#0000ff"/>
<rect x="229" y="224" width="1" height="22" fill="#0000ff"/>
<rect x="104" y="224" width="1" height="51" fill="#0000ff"/>
<rect x="97" y="274" width="16" height="1" fill="#0000ff"/>
<rect x="229" y="278" width="1" height="30" fill="#0000ff"/>
<rect x="229" y="307" width="167" height="1" fill="#0000ff"/>
<rect x="163" y="257" width="26" height="1" fill="#0000ff"/>
<rect x="163" y="274" width="33" height="1" fill="#0000ff"/>
<rect x="163" y="291" width="33" height="1" fill="#0000ff"/>
<rect x="163" y="307" width="33" height="1" fill="#0000ff"/>
<rect x="195" y="299" width="1" height="9" fill="#0000ff"/>
<rect x="163" y="324" width="125" height="1" fill="#0000ff"/>
<rect x="287" y="324" width="1" height="47" fill="#0000ff"/>
<rect x="163" y="341" width="83" height="1" fill="#0000ff"/>
<rect x="245" y="341" width="1" height="30" fill="#0000ff"/>
<rect x="163" y="357" width="42" height="1" fill="#0000ff"/>
<rect x="204" y="357" width="1" height="14" fill="#0000ff"/>
<rect x="163" y="374" width="25" height="1" fill="#0000ff"/>
<rect x="187" y="374" width="1" height="58" fill="#0000ff"/>
<rect x="187" y="431" width="192" height="1" fill="#0000ff"/>
<rect x="378" y="307" width="1" height="125" fill="#0000ff"/>
<rect x="54" y="341" width="10" height="1" fill="#0000ff"/>
<rect x="54" y="341" width="1" height="17" fill="#0000ff"/>
<rect x="54" y="357" width="59" height="1" fill="#0000ff"/>
<rect x="96" y="341" width="17" height="1" fill="#0000ff"/>
<rect x="328" y="307" width="1" height="19" fill="#0000ff"/>
<rect x="328" y="357" width="1" height="10" fill="#0000ff"/>
<rect x="204" y="403" width="1" height="13" fill="#0000ff"/>
<rect x="245" y="403" width="1" height="13" fill="#0000ff"/>
<rect x="287" y="403" width="1" height="13" fill="#0000ff"/>
<rect x="185" y="131" width="5" height="5" fill="#0000ff"/>
<rect x="44" y="197" width="5" height="5" fill="#0000ff"/>
<rect x="318" y="156" width="5" height="5" fill="#0000ff"/>
<rect x="451" y="131" width="5" height="5" fill="#0000ff"/>
<rect x="476" y="131" width="5" height="5" fill="#0000ff"/>
<rect x="451" y="222" width="5" height="5" fill="#0000ff"/>
<rect x="476" y="222" width="5" height="5" fill="#0000ff"/>
<rect x="418" y="255" width="5" height="5" fill="#0000ff"/>
<rect x="102" y="272" width="5" height="5" fill="#0000ff"/>
<rect x="326" y="305" width="5" height="5" fill="#0000ff"/>
<rect x="376" y="305" width="5" height="5" fill="#0000ff"/>
</g>
<g shape-rendering="crispEdges">
<path d="M71.5 108.5 L154.5 108.5 L154.5 183.5 L71.5 183.5Z" stroke="#000080" stroke-width="1" fill="none"/>
<rect x="111.5" y="106.5" width="3" height="3" fill="none" stroke="#0000ff"/>
<rect x="111.5" y="181.5" width="3" height="3" fill="none" stroke="#0000ff"/>
<path d="M212.5 108.5 L295.5 108.5 L295.5 183.5 L212.5 183.5Z" stroke="#000080" stroke-width="1" fill="none"/>
<rect x="252.5" y="106.5" width="3" height="3" fill="none" stroke="#0000ff"/>
<rect x="252.5" y="181.5" width="3" height="3" fill="none" stroke="#0000ff"/>
<path d="M112.5 250.5 L163.5 250.5 L163.5 383.5 L112.5 383.5Z" stroke="#000080" stroke-width="1" fill="none"/>
</g>
<path d="M71.5 154.5 L75.5 158.5 L71.5 162.5" stroke="#0000ff" stroke-width="1" fill="none"/>
<path d="M62.5 183.5 L80.5 183.5 L71.5 192.5Z" stroke="#0000ff" stroke-width="1" fill="none"/>
<circle cx="158.5" cy="158" r="3.5" fill="none" stroke="#000080"/>
<rect x="144" y="150" width="8" height="2" fill="#000"/>
<path d="M212.5 154.5 L216.5 158.5 L212.5 162.5" stroke="#0000ff" stroke-width="1" fill="none"/>
<path d="M203.5 183.5 L221.5 183.5 L212.5 192.5Z" stroke="#0000ff" stroke-width="1" fill="none"/>
<circle cx="299.5" cy="158" r="3.5" fill="none" stroke="#000080"/>
<rect x="285" y="150" width="8" height="2" fill="#000"/>
<path d="M363.5 133.5 L366.5 133.5 L370.5 125.5 L378.5 141.5 L387.5 125.5 L395.5 141.5 L399.5 133.5 L403.5 133.5" stroke="#000080" stroke-width="1" fill="none"/>
<path d="M363.5 224.5 L366.5 224.5 L370.5 216.5 L378.5 232.5 L387.5 216.5 L395.5 232.5 L399.5 224.5 L403.5 224.5" stroke="#000080" stroke-width="1" fill="none"/>
<path d="M439.5 257.5 L442.5 257.5 L446.5 265.5 L454.5 249.5 L463.5 265.5 L471.5 249.5 L475.5 257.5 L479.5 257.5" stroke="#000080" stroke-width="1" fill="none"/>
<path d="M229.5 245.5 L220.5 250.0 L238.0 257.5 L220.5 266.5 L238.0 275.0 L229.5 279.0" stroke="#000080" stroke-width="1" fill="none"/>
<path d="M204.5 370.5 L195.5 375.0 L213.0 382.5 L195.5 391.5 L213.0 400.0 L204.5 404.0" stroke="#000080" stroke-width="1" fill="none"/>
<path d="M245.5 370.5 L236.5 375.0 L254.0 382.5 L236.5 391.5 L254.0 400.0 L245.5 404.0" stroke="#000080" stroke-width="1" fill="none"/>
<path d="M287.5 370.5 L278.5 375.0 L296.0 382.5 L278.5 391.5 L296.0 400.0 L287.5 404.0" stroke="#000080" stroke-width="1" fill="none"/>
<path d="M195.5 415.5 L213.5 415.5 L204.5 424.5Z" stroke="#0000ff" stroke-width="1" fill="none"/>
<path d="M236.5 415.5 L254.5 415.5 L245.5 424.5Z" stroke="#0000ff" stroke-width="1" fill="none"/>
<path d="M278.5 415.5 L296.5 415.5 L287.5 424.5Z" stroke="#0000ff" stroke-width="1" fill="none"/>
<path d="M319.5 366.5 L337.5 366.5 L328.5 375.5Z" stroke="#0000ff" stroke-width="1" fill="none"/>
<path d="M477.5 424.5 L495.5 424.5 L486.5 433.5Z" stroke="#0000ff" stroke-width="1" fill="none"/>
<g shape-rendering="crispEdges">
<rect x="520" y="167" width="1" height="14" fill="#000080"/>
<rect x="511" y="180" width="19" height="1" fill="#000080"/>
<rect x="511" y="185" width="19" height="1" fill="#000080"/>
<rect x="520" y="185" width="1" height="15" fill="#000080"/>
<rect x="328" y="325" width="1" height="14" fill="#000080"/>
<rect x="320" y="338" width="19" height="1" fill="#000080"/>
<rect x="320" y="343" width="19" height="1" fill="#000080"/>
<rect x="328" y="343" width="1" height="15" fill="#000080"/>
<rect x="63" y="341" width="15" height="1" fill="#000080"/>
<rect x="77" y="332" width="1" height="18" fill="#000080"/>
<rect x="81" y="332" width="1" height="18" fill="#000080"/>
<rect x="81" y="341" width="16" height="1" fill="#000080"/>
<rect x="486" y="382" width="1" height="12" fill="#000080"/>
<rect x="470" y="393" width="34" height="1" fill="#000080"/>
<rect x="478.5" y="397.5" width="17" height="4" fill="none" stroke="#000080"/>
<rect x="470" y="405" width="34" height="1" fill="#000080"/>
<rect x="478.5" y="409.5" width="17" height="4" fill="none" stroke="#000080"/>
<rect x="486" y="414" width="1" height="11" fill="#000080"/>
</g>
<path d="M478.5 166.5 Q484.5 166.5 486.5 173 V201 Q484.5 207.5 478.5 207.5" stroke="#000080" fill="none"/>
<path d="M472.5 181 Q479 176.5 486.5 181 Q479 185.5 472.5 181Z M472.5 193.5 Q479 189 486.5 193.5 Q479 198 472.5 193.5Z" stroke="#000080" fill="none"/>
<circle cx="419.5" cy="186.6" r="16" fill="none" stroke="#000080"/>
<path d="M412.0 166.3 L430.0 166.3 L420.5 157.5Z" stroke="#0000ff" stroke-width="1" fill="none"/>
<path d="M420.5 166.5 L420.5 176.5" stroke="#000080" stroke-width="1" fill="none"/>
<circle cx="420.5" cy="178.5" r="1.8" fill="none" stroke="#000080"/>
<circle cx="409.5" cy="185" r="1.8" fill="none" stroke="#000080"/>
<path d="M411.5 187.5 L420.5 197.5 L420.5 203.5" stroke="#000080" stroke-width="1" fill="none"/>
<path d="M434.5 176.5 L436.5 174.5" stroke="#000080" stroke-width="1" fill="none"/>
<path d="M433.5 197.5 L437.5 199.5" stroke="#000080" stroke-width="1" fill="none"/>
<g shape-rendering="crispEdges">
<rect x="441" y="178" width="5" height="1" fill="#000080"/>
<rect x="443" y="176" width="1" height="5" fill="#000080"/>
<rect x="441" y="195" width="5" height="1" fill="#000080"/>
<rect x="476" y="386" width="5" height="1" fill="#000080"/>
<rect x="478" y="384" width="1" height="5" fill="#000080"/>
</g>
<text x="116" y="103" font-size="10.5" font-weight="bold" fill="#000" textLength="15" lengthAdjust="spacingAndGlyphs" stroke="#000" stroke-width="0.3">A1</text>
<text x="257" y="103" font-size="10.5" font-weight="bold" fill="#000" textLength="14" lengthAdjust="spacingAndGlyphs" stroke="#000" stroke-width="0.3">A2</text>
<text x="101.9" y="121" font-size="10.5" font-weight="bold" fill="#000" textLength="19.2" lengthAdjust="spacingAndGlyphs" stroke="#000" stroke-width="0.3">PRE</text>
<text x="74.8" y="137" font-size="10.5" font-weight="bold" fill="#000" textLength="6.2" lengthAdjust="spacingAndGlyphs" stroke="#000" stroke-width="0.3">D</text>
<text x="144" y="137" font-size="10.5" font-weight="bold" fill="#000" textLength="7.4" lengthAdjust="spacingAndGlyphs" stroke="#000" stroke-width="0.3">Q</text>
<text x="75.4" y="162" font-size="10.5" font-weight="bold" fill="#000" textLength="20.8" lengthAdjust="spacingAndGlyphs" stroke="#000" stroke-width="0.3">CLK</text>
<text x="144" y="162" font-size="10.5" font-weight="bold" fill="#000" textLength="7.4" lengthAdjust="spacingAndGlyphs" stroke="#000" stroke-width="0.3">Q</text>
<text x="101" y="177" font-size="10.5" font-weight="bold" fill="#000" textLength="21.5" lengthAdjust="spacingAndGlyphs" stroke="#000" stroke-width="0.3">CLR</text>
<text x="89.7" y="196" font-size="10.5" font-weight="bold" fill="#000" textLength="65.3" lengthAdjust="spacingAndGlyphs" stroke="#000" stroke-width="0.3">Vhigh={Vcc}</text>
<text x="242.9" y="121" font-size="10.5" font-weight="bold" fill="#000" textLength="19.2" lengthAdjust="spacingAndGlyphs" stroke="#000" stroke-width="0.3">PRE</text>
<text x="215.8" y="137" font-size="10.5" font-weight="bold" fill="#000" textLength="6.2" lengthAdjust="spacingAndGlyphs" stroke="#000" stroke-width="0.3">D</text>
<text x="285" y="137" font-size="10.5" font-weight="bold" fill="#000" textLength="7.4" lengthAdjust="spacingAndGlyphs" stroke="#000" stroke-width="0.3">Q</text>
<text x="216.4" y="162" font-size="10.5" font-weight="bold" fill="#000" textLength="20.8" lengthAdjust="spacingAndGlyphs" stroke="#000" stroke-width="0.3">CLK</text>
<text x="285" y="162" font-size="10.5" font-weight="bold" fill="#000" textLength="7.4" lengthAdjust="spacingAndGlyphs" stroke="#000" stroke-width="0.3">Q</text>
<text x="242" y="177" font-size="10.5" font-weight="bold" fill="#000" textLength="21.5" lengthAdjust="spacingAndGlyphs" stroke="#000" stroke-width="0.3">CLR</text>
<text x="229.5" y="195.2" font-size="10.5" font-weight="bold" fill="#000" textLength="65.3" lengthAdjust="spacingAndGlyphs" stroke="#000" stroke-width="0.3">Vhigh={Vcc}</text>
<text x="167.3" y="130.5" font-size="10.5" font-weight="bold" fill="#000" textLength="6.7" lengthAdjust="spacingAndGlyphs" stroke="#000" stroke-width="0.3">Q</text>
<text x="164.2" y="155" font-size="10.5" font-weight="bold" fill="#000" textLength="13.4" lengthAdjust="spacingAndGlyphs" stroke="#000" stroke-width="0.3">Q_</text>
<text x="335" y="130.5" font-size="10.5" font-weight="bold" fill="#000" textLength="4" lengthAdjust="spacingAndGlyphs" stroke="#000" stroke-width="0.3">I</text>
<text x="374.9" y="121" font-size="10.5" font-weight="bold" fill="#000" textLength="12.2" lengthAdjust="spacingAndGlyphs" stroke="#000" stroke-width="0.3">R3</text>
<text x="374.9" y="152" font-size="10.5" font-weight="bold" fill="#000" textLength="11.9" lengthAdjust="spacingAndGlyphs" stroke="#000" stroke-width="0.3">1k</text>
<text x="478.6" y="130" font-size="10.5" font-weight="bold" fill="#000" textLength="31.7" lengthAdjust="spacingAndGlyphs" stroke="#000" stroke-width="0.3">Tank+</text>
<text x="376" y="170" font-size="10.5" font-weight="bold" fill="#000" textLength="30" lengthAdjust="spacingAndGlyphs" stroke="#000" stroke-width="0.3">comp</text>
<text x="487.8" y="181.5" font-size="10.5" font-weight="bold" fill="#000" textLength="11.5" lengthAdjust="spacingAndGlyphs" stroke="#000" stroke-width="0.3">L1</text>
<text x="487.8" y="203" font-size="10.5" font-weight="bold" fill="#000" textLength="16.2" lengthAdjust="spacingAndGlyphs" stroke="#000" stroke-width="0.3">1m</text>
<text x="523.3" y="174" font-size="10.5" font-weight="bold" fill="#000" textLength="13.5" lengthAdjust="spacingAndGlyphs" stroke="#000" stroke-width="0.3">C2</text>
<text x="523.3" y="199" font-size="10.5" font-weight="bold" fill="#000" textLength="25.0" lengthAdjust="spacingAndGlyphs" stroke="#000" stroke-width="0.3">220n</text>
<text x="374.5" y="213" font-size="10.5" font-weight="bold" fill="#000" textLength="12.6" lengthAdjust="spacingAndGlyphs" stroke="#000" stroke-width="0.3">R6</text>
<text x="394.2" y="213" font-size="10.5" font-weight="bold" fill="#000" textLength="11.4" lengthAdjust="spacingAndGlyphs" stroke="#000" stroke-width="0.3">S1</text>
<text x="339.8" y="220.5" font-size="10.5" font-weight="bold" fill="#000" textLength="8.6" lengthAdjust="spacingAndGlyphs" stroke="#000" stroke-width="0.3">I_</text>
<text x="479.7" y="221" font-size="10.5" font-weight="bold" fill="#000" textLength="29.1" lengthAdjust="spacingAndGlyphs" stroke="#000" stroke-width="0.3">Tank-</text>
<text x="374.9" y="243" font-size="10.5" font-weight="bold" fill="#000" textLength="11.9" lengthAdjust="spacingAndGlyphs" stroke="#000" stroke-width="0.3">1k</text>
<text x="439.7" y="246" font-size="10.5" font-weight="bold" fill="#000" textLength="33.0" lengthAdjust="spacingAndGlyphs" stroke="#000" stroke-width="0.3">Rgeb1</text>
<text x="351" y="261" font-size="10.5" font-weight="bold" fill="#000" textLength="18.5" lengthAdjust="spacingAndGlyphs" stroke="#000" stroke-width="0.3">REF</text>
<text x="486.8" y="261" font-size="10.5" font-weight="bold" fill="#000" textLength="22.0" lengthAdjust="spacingAndGlyphs" stroke="#000" stroke-width="0.3">VCC</text>
<text x="447.2" y="277" font-size="10.5" font-weight="bold" fill="#000" textLength="17.6" lengthAdjust="spacingAndGlyphs" stroke="#000" stroke-width="0.3">22k</text>
<text x="131" y="241" font-size="10.5" font-weight="bold" fill="#000" textLength="11.6" lengthAdjust="spacingAndGlyphs" stroke="#000" stroke-width="0.3">X1</text>
<text x="116.7" y="278" font-size="10.5" font-weight="bold" fill="#000" textLength="5.7" lengthAdjust="spacingAndGlyphs" stroke="#000" stroke-width="0.3">2</text>
<text x="116.7" y="295" font-size="10.5" font-weight="bold" fill="#000" textLength="5.7" lengthAdjust="spacingAndGlyphs" stroke="#000" stroke-width="0.3">3</text>
<text x="116.7" y="311" font-size="10.5" font-weight="bold" fill="#000" textLength="5.7" lengthAdjust="spacingAndGlyphs" stroke="#000" stroke-width="0.3">4</text>
<text x="116.7" y="344.5" font-size="10.5" font-weight="bold" fill="#000" textLength="5.7" lengthAdjust="spacingAndGlyphs" stroke="#000" stroke-width="0.3">6</text>
<text x="116.7" y="361" font-size="10.5" font-weight="bold" fill="#000" textLength="5.7" lengthAdjust="spacingAndGlyphs" stroke="#000" stroke-width="0.3">7</text>
<text x="145.5" y="261" font-size="10.5" font-weight="bold" fill="#000" textLength="12.1" lengthAdjust="spacingAndGlyphs" stroke="#000" stroke-width="0.3">16</text>
<text x="145.5" y="278" font-size="10.5" font-weight="bold" fill="#000" textLength="12.1" lengthAdjust="spacingAndGlyphs" stroke="#000" stroke-width="0.3">15</text>
<text x="145.5" y="294.5" font-size="10.5" font-weight="bold" fill="#000" textLength="12.1" lengthAdjust="spacingAndGlyphs" stroke="#000" stroke-width="0.3">14</text>
<text x="145.5" y="311" font-size="10.5" font-weight="bold" fill="#000" textLength="12.1" lengthAdjust="spacingAndGlyphs" stroke="#000" stroke-width="0.3">13</text>
<text x="145.5" y="328" font-size="10.5" font-weight="bold" fill="#000" textLength="12.1" lengthAdjust="spacingAndGlyphs" stroke="#000" stroke-width="0.3">12</text>
<text x="145.5" y="344.5" font-size="10.5" font-weight="bold" fill="#000" textLength="12.1" lengthAdjust="spacingAndGlyphs" stroke="#000" stroke-width="0.3">11</text>
<text x="145.5" y="361" font-size="10.5" font-weight="bold" fill="#000" textLength="12.1" lengthAdjust="spacingAndGlyphs" stroke="#000" stroke-width="0.3">10</text>
<text x="151.8" y="378" font-size="10.5" font-weight="bold" fill="#000" textLength="5.8" lengthAdjust="spacingAndGlyphs" stroke="#000" stroke-width="0.3">9</text>
<text x="90.2" y="278" font-size="10.5" font-weight="bold" fill="#000" textLength="5.3" lengthAdjust="spacingAndGlyphs" stroke="#000" stroke-width="0.3">2</text>
<text x="187.3" y="261" font-size="10.5" font-weight="bold" fill="#000" textLength="23.1" lengthAdjust="spacingAndGlyphs" stroke="#000" stroke-width="0.3">VCC</text>
<text x="195.4" y="278" font-size="10.5" font-weight="bold" fill="#000" textLength="10.6" lengthAdjust="spacingAndGlyphs" stroke="#000" stroke-width="0.3">15</text>
<text x="195.4" y="295" font-size="10.5" font-weight="bold" fill="#000" textLength="17.8" lengthAdjust="spacingAndGlyphs" stroke="#000" stroke-width="0.3">REF</text>
<text x="53.2" y="304" font-size="10.5" font-weight="bold" fill="#000" textLength="50.1" lengthAdjust="spacingAndGlyphs" stroke="#000" stroke-width="0.3">VCO_OUT</text>
<text x="238.3" y="255" font-size="10.5" font-weight="bold" fill="#000" textLength="13.6" lengthAdjust="spacingAndGlyphs" stroke="#000" stroke-width="0.3">R4</text>
<text x="238.3" y="274.5" font-size="10.5" font-weight="bold" fill="#000" textLength="24.4" lengthAdjust="spacingAndGlyphs" stroke="#000" stroke-width="0.3">100k</text>
<text x="261.4" y="295" font-size="10.5" font-weight="bold" fill="#000" textLength="243.6" lengthAdjust="spacingAndGlyphs" stroke="#000" stroke-width="0.3">.model comp sw (ron=.1 Roff=1e8 Vt=0 Vh=0)</text>
<text x="395" y="311" font-size="10.5" font-weight="bold" fill="#000" textLength="119.3" lengthAdjust="spacingAndGlyphs" stroke="#000" stroke-width="0.3">Phase_LOC_CONTROL</text>
<text x="71.9" y="329" font-size="10.5" font-weight="bold" fill="#000" textLength="12.5" lengthAdjust="spacingAndGlyphs" stroke="#000" stroke-width="0.3">C1</text>
<text x="69" y="360" font-size="10.5" font-weight="bold" fill="#000" textLength="18.3" lengthAdjust="spacingAndGlyphs" stroke="#000" stroke-width="0.3">4n7</text>
<text x="332.8" y="332" font-size="10.5" font-weight="bold" fill="#000" textLength="14.0" lengthAdjust="spacingAndGlyphs" stroke="#000" stroke-width="0.3">C4</text>
<text x="332.8" y="357" font-size="10.5" font-weight="bold" fill="#000" textLength="24.4" lengthAdjust="spacingAndGlyphs" stroke="#000" stroke-width="0.3">100n</text>
<text x="165.1" y="353.5" font-size="10.5" font-weight="bold" fill="#000" textLength="43.2" lengthAdjust="spacingAndGlyphs" stroke="#000" stroke-width="0.3">DemOut</text>
<text x="213.6" y="380" font-size="10.5" font-weight="bold" fill="#000" textLength="12.4" lengthAdjust="spacingAndGlyphs" stroke="#000" stroke-width="0.3">R9</text>
<text x="214" y="399" font-size="10.5" font-weight="bold" fill="#000" textLength="23.6" lengthAdjust="spacingAndGlyphs" stroke="#000" stroke-width="0.3">100k</text>
<text x="255.4" y="380" font-size="10.5" font-weight="bold" fill="#000" textLength="12.3" lengthAdjust="spacingAndGlyphs" stroke="#000" stroke-width="0.3">R1</text>
<text x="255.8" y="399" font-size="10.5" font-weight="bold" fill="#000" textLength="17.9" lengthAdjust="spacingAndGlyphs" stroke="#000" stroke-width="0.3">15k</text>
<text x="296.5" y="380" font-size="10.5" font-weight="bold" fill="#000" textLength="12.5" lengthAdjust="spacingAndGlyphs" stroke="#000" stroke-width="0.3">R2</text>
<text x="296.5" y="399" font-size="10.5" font-weight="bold" fill="#000" textLength="24.5" lengthAdjust="spacingAndGlyphs" stroke="#000" stroke-width="0.3">100k</text>
<text x="499.3" y="386.5" font-size="10.5" font-weight="bold" fill="#000" textLength="12.3" lengthAdjust="spacingAndGlyphs" stroke="#000" stroke-width="0.3">V1</text>
<text x="497.7" y="432.5" font-size="10.5" font-weight="bold" fill="#000" textLength="29.1" lengthAdjust="spacingAndGlyphs" stroke="#000" stroke-width="0.3">{Vcc}</text>
<text transform="translate(141,357.6) rotate(-90)" font-size="12.5" font-weight="bold" fill="#000" textLength="90" lengthAdjust="spacingAndGlyphs">(MC74/HC)4046</text>
<text transform="translate(490.4,380.2) rotate(-90)" font-size="13" font-weight="bold" fill="#000" stroke="#000" stroke-width="0.2" textLength="24.2" lengthAdjust="spacingAndGlyphs">VCC</text>
<text x="452.8" y="457" font-size="10.8" font-weight="bold" fill="#000" textLength="72.2" lengthAdjust="spacingAndGlyphs" stroke="#000" stroke-width="0.3">.param Vcc=6</text>
<text x="452.8" y="478" font-size="10.8" font-weight="bold" fill="#000" textLength="84.2" lengthAdjust="spacingAndGlyphs" stroke="#000" stroke-width="0.3">.tran 0 50m 0 1u</text>
<text x="97.5" y="446" font-size="16.8" font-weight="bold" fill="#0000d0" textLength="243.5" lengthAdjust="spacingAndGlyphs">PLL coupled balanced oscillator</text>
<text x="43.7" y="465.5" font-size="16.8" font-weight="bold" fill="#0000d0" textLength="351.5" lengthAdjust="spacingAndGlyphs">(C) 9 January 2013 Davor V. All rights reserved</text>
<text x="80.5" y="485" font-size="16.8" font-weight="bold" fill="#0000d0" textLength="278.5" lengthAdjust="spacingAndGlyphs">contact: davorslistdepot@gmail.com</text>
<text x="80.5" y="504" font-size="16.8" font-weight="bold" fill="#0000d0" textLength="278.5" lengthAdjust="spacingAndGlyphs">or private message at Geotech forum</text>
</g>
</svg></body></html>
